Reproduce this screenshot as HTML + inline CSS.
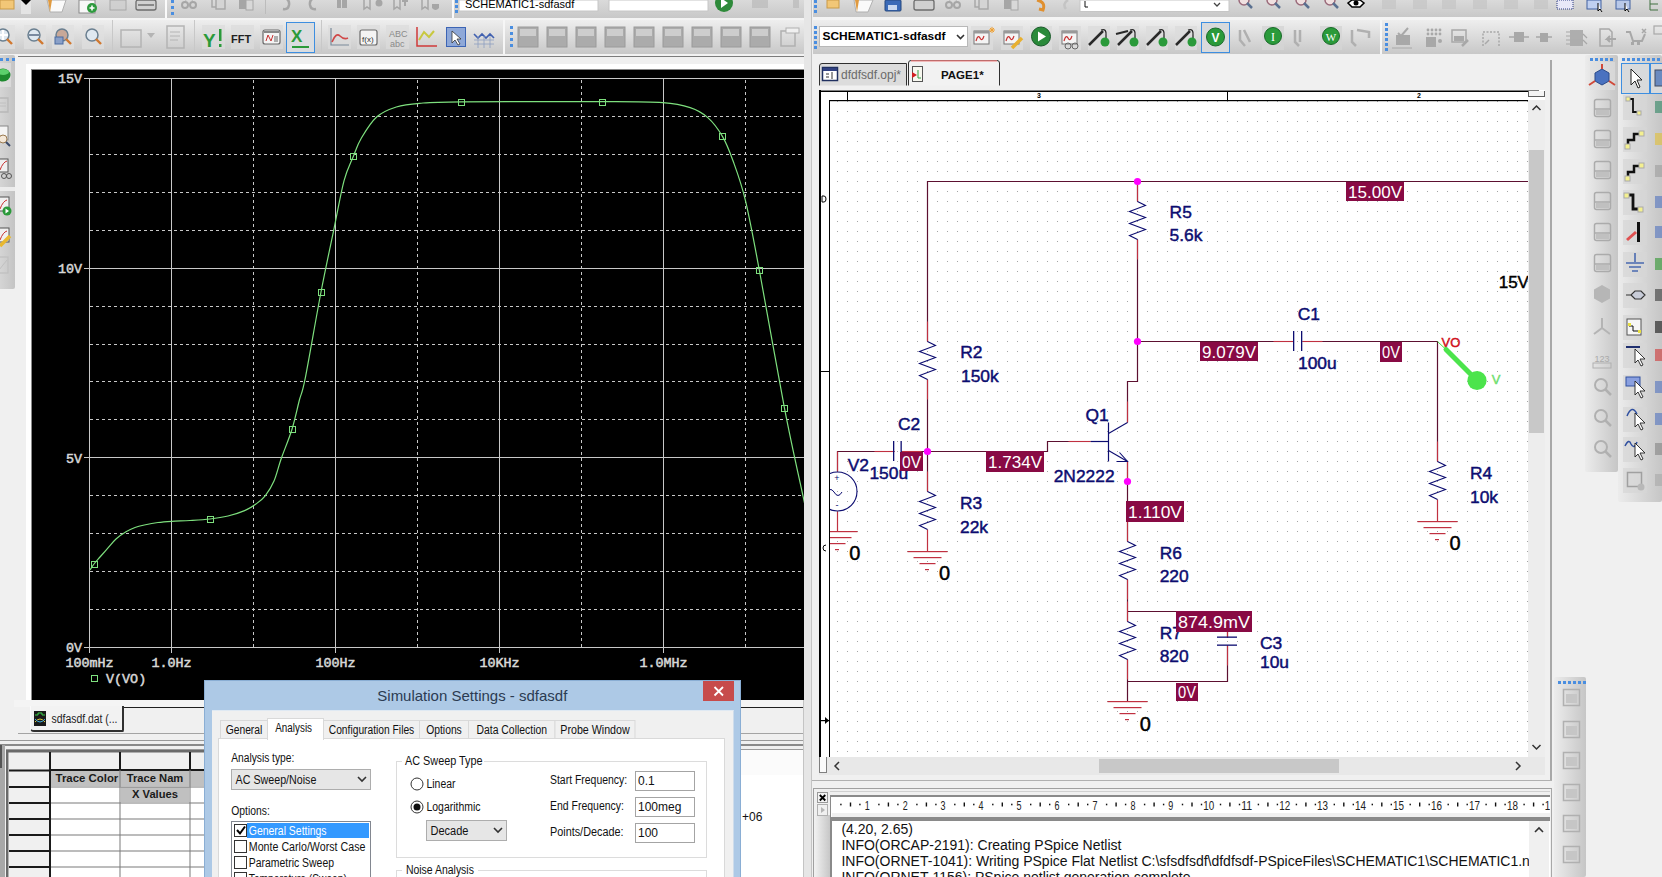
<!DOCTYPE html><html><head><meta charset="utf-8"><style>
*{margin:0;padding:0;box-sizing:border-box}
html,body{width:1662px;height:877px;overflow:hidden;background:#f0f0f0;font-family:"Liberation Sans", sans-serif;position:relative}
.a{position:absolute}
.tb{position:absolute;background:linear-gradient(#ececec,#d6d6d6)}
.btn{position:absolute;width:22px;height:22px;background:rgba(255,255,255,0.25)}
</style></head><body>
<div class="tb" style="left:0;top:0;width:804px;height:18px;background:linear-gradient(#dadada,#c8c8c8)"></div>
<div class="a" style="left:0;top:18px;width:804px;height:2px;background:#f4f4f4"></div>
<div class="tb" style="left:0;top:20px;width:804px;height:34px;background:linear-gradient(#eeeeee,#c8c8c8)"></div>
<div class="a" style="left:0;top:54px;width:804px;height:2px;background:#f2f2f2"></div>
<div class="a" style="left:18px;top:56px;width:786px;height:1px;background:#7c7c7c"></div>
<div class="a" style="left:26px;top:64px;width:778px;height:642px;background:#ffffff"></div>
<div class="a" style="left:31px;top:69px;width:773px;height:632px;background:#8a8a8a"></div>
<svg class="a" style="left:32px;top:70px" width="772" height="630" viewBox="32 70 772 630"><rect x="32" y="70" width="772" height="630" fill="#000"/><line x1="84" y1="78.5" x2="804" y2="78.5" stroke="#c8c8c8" stroke-width="1"/><line x1="90" y1="116.5" x2="804" y2="116.5" stroke="#c8c8c8" stroke-width="1" stroke-dasharray="3 3"/><line x1="90" y1="154.5" x2="804" y2="154.5" stroke="#c8c8c8" stroke-width="1" stroke-dasharray="3 3"/><line x1="90" y1="192.5" x2="804" y2="192.5" stroke="#c8c8c8" stroke-width="1" stroke-dasharray="3 3"/><line x1="90" y1="230.5" x2="804" y2="230.5" stroke="#c8c8c8" stroke-width="1" stroke-dasharray="3 3"/><line x1="84" y1="268.5" x2="804" y2="268.5" stroke="#c8c8c8" stroke-width="1"/><line x1="90" y1="306.5" x2="804" y2="306.5" stroke="#c8c8c8" stroke-width="1" stroke-dasharray="3 3"/><line x1="90" y1="344.5" x2="804" y2="344.5" stroke="#c8c8c8" stroke-width="1" stroke-dasharray="3 3"/><line x1="90" y1="381.5" x2="804" y2="381.5" stroke="#c8c8c8" stroke-width="1" stroke-dasharray="3 3"/><line x1="90" y1="419.5" x2="804" y2="419.5" stroke="#c8c8c8" stroke-width="1" stroke-dasharray="3 3"/><line x1="84" y1="457.5" x2="804" y2="457.5" stroke="#c8c8c8" stroke-width="1"/><line x1="90" y1="495.5" x2="804" y2="495.5" stroke="#c8c8c8" stroke-width="1" stroke-dasharray="3 3"/><line x1="90" y1="533.5" x2="804" y2="533.5" stroke="#c8c8c8" stroke-width="1" stroke-dasharray="3 3"/><line x1="90" y1="571.5" x2="804" y2="571.5" stroke="#c8c8c8" stroke-width="1" stroke-dasharray="3 3"/><line x1="90" y1="609.5" x2="804" y2="609.5" stroke="#c8c8c8" stroke-width="1" stroke-dasharray="3 3"/><line x1="84" y1="647.5" x2="804" y2="647.5" stroke="#c8c8c8" stroke-width="1"/><line x1="89.5" y1="78" x2="89.5" y2="653" stroke="#c8c8c8" stroke-width="1"/><line x1="171.5" y1="78" x2="171.5" y2="653" stroke="#c8c8c8" stroke-width="1"/><line x1="253.5" y1="80" x2="253.5" y2="647" stroke="#c8c8c8" stroke-width="1" stroke-dasharray="3 3"/><line x1="335.5" y1="78" x2="335.5" y2="653" stroke="#c8c8c8" stroke-width="1"/><line x1="417.5" y1="80" x2="417.5" y2="647" stroke="#c8c8c8" stroke-width="1" stroke-dasharray="3 3"/><line x1="499.5" y1="78" x2="499.5" y2="653" stroke="#c8c8c8" stroke-width="1"/><line x1="581.5" y1="80" x2="581.5" y2="647" stroke="#c8c8c8" stroke-width="1" stroke-dasharray="3 3"/><line x1="663.5" y1="78" x2="663.5" y2="653" stroke="#c8c8c8" stroke-width="1"/><line x1="745.5" y1="80" x2="745.5" y2="647" stroke="#c8c8c8" stroke-width="1" stroke-dasharray="3 3"/><text x="82" y="82.5" fill="#d8d8d8" stroke="#d8d8d8" stroke-width="0.5" font-family='"Liberation Mono", monospace' font-size="13.4" text-anchor="end">15V</text><text x="82" y="272.5" fill="#d8d8d8" stroke="#d8d8d8" stroke-width="0.5" font-family='"Liberation Mono", monospace' font-size="13.4" text-anchor="end">10V</text><text x="82" y="462.5" fill="#d8d8d8" stroke="#d8d8d8" stroke-width="0.5" font-family='"Liberation Mono", monospace' font-size="13.4" text-anchor="end">5V</text><text x="82" y="651.5" fill="#d8d8d8" stroke="#d8d8d8" stroke-width="0.5" font-family='"Liberation Mono", monospace' font-size="13.4" text-anchor="end">0V</text><text x="89.5" y="667" fill="#d8d8d8" stroke="#d8d8d8" stroke-width="0.5" font-family='"Liberation Mono", monospace' font-size="13.4" text-anchor="middle">100mHz</text><text x="171.5" y="667" fill="#d8d8d8" stroke="#d8d8d8" stroke-width="0.5" font-family='"Liberation Mono", monospace' font-size="13.4" text-anchor="middle">1.0Hz</text><text x="335.5" y="667" fill="#d8d8d8" stroke="#d8d8d8" stroke-width="0.5" font-family='"Liberation Mono", monospace' font-size="13.4" text-anchor="middle">100Hz</text><text x="499.5" y="667" fill="#d8d8d8" stroke="#d8d8d8" stroke-width="0.5" font-family='"Liberation Mono", monospace' font-size="13.4" text-anchor="middle">10KHz</text><text x="663.5" y="667" fill="#d8d8d8" stroke="#d8d8d8" stroke-width="0.5" font-family='"Liberation Mono", monospace' font-size="13.4" text-anchor="middle">1.0MHz</text><rect x="91.5" y="675.5" width="6" height="6" fill="none" stroke="#7ee07e" stroke-width="1"/><text x="106" y="683" fill="#d8d8d8" stroke="#d8d8d8" stroke-width="0.5" font-family='"Liberation Mono", monospace' font-size="13.4" text-anchor="start">V(VO)</text><path d="M90,570 C90.67,569.00 92.33,566.17 94,564 C95.67,561.83 97.70,559.63 100,557 C102.30,554.37 105.13,551.20 107.8,548.2 C110.47,545.20 112.97,541.73 116,539 C119.03,536.27 122.83,533.72 126,531.8 C129.17,529.88 131.95,528.63 135,527.5 C138.05,526.37 140.47,525.83 144.3,525 C148.13,524.17 153.43,523.12 158,522.5 C162.57,521.88 166.37,521.63 171.7,521.3 C177.03,520.97 183.62,520.88 190,520.5 C196.38,520.12 203.67,519.75 210,519 C216.33,518.25 222.23,517.40 228,516 C233.77,514.60 239.93,512.60 244.6,510.6 C249.27,508.60 252.57,506.47 256,504 C259.43,501.53 262.20,499.63 265.2,495.8 C268.20,491.97 271.37,487.08 274,481 C276.63,474.92 278.00,467.93 281,459.3 C284.00,450.67 288.93,439.08 292,429.2 C295.07,419.32 297.20,408.47 299.4,400 C301.60,391.53 301.60,396.40 305.2,378.4 C308.80,360.40 316.15,317.18 321,292 C325.85,266.82 330.47,245.83 334.3,227.3 C338.13,208.77 340.83,192.62 344,180.8 C347.17,168.98 350.40,163.53 353.3,156.4 C356.20,149.27 357.47,144.60 361.4,138 C365.33,131.40 371.08,121.97 376.9,116.8 C382.72,111.63 389.20,109.25 396.3,107 C403.40,104.75 408.72,104.17 419.5,103.3 C430.28,102.43 430.58,102.08 461,101.8 C491.42,101.52 568.38,101.47 602,101.6 C635.62,101.73 648.00,101.60 662.7,102.6 C677.40,103.60 682.68,105.10 690.2,107.6 C697.72,110.10 702.45,112.85 707.8,117.6 C713.15,122.35 718.13,129.00 722.3,136.1 C726.47,143.20 728.95,149.50 732.8,160.2 C736.65,170.90 740.97,181.92 745.4,200.3 C749.83,218.68 752.88,235.83 759.4,270.5 C765.92,305.17 777.23,370.72 784.5,408.3 C791.77,445.88 799.42,479.05 803,496 C806.58,512.95 805.50,507.67 806,510" fill="none" stroke="#7ee07e" stroke-width="1.2" stroke-linejoin="round"/><rect x="91.5" y="561.5" width="6" height="6" fill="none" stroke="#7ee07e" stroke-width="1"/><rect x="207.5" y="516.5" width="6" height="6" fill="none" stroke="#7ee07e" stroke-width="1"/><rect x="289.5" y="426.5" width="6" height="6" fill="none" stroke="#7ee07e" stroke-width="1"/><rect x="318.5" y="289.5" width="6" height="6" fill="none" stroke="#7ee07e" stroke-width="1"/><rect x="350.5" y="153.5" width="6" height="6" fill="none" stroke="#7ee07e" stroke-width="1"/><rect x="458.5" y="99.5" width="6" height="6" fill="none" stroke="#7ee07e" stroke-width="1"/><rect x="599.5" y="99.5" width="6" height="6" fill="none" stroke="#7ee07e" stroke-width="1"/><rect x="719.5" y="133.5" width="6" height="6" fill="none" stroke="#7ee07e" stroke-width="1"/><rect x="756.5" y="267.5" width="6" height="6" fill="none" stroke="#7ee07e" stroke-width="1"/><rect x="781.5" y="405.5" width="6" height="6" fill="none" stroke="#7ee07e" stroke-width="1"/></svg>
<svg class="a" style="left:0;top:0" width="804" height="70" viewBox="0 0 804 70"><rect x="0" y="0" width="14" height="9" fill="#f2c777" stroke="#c99a48"/><rect x="21" y="0" width="10" height="14" fill="#e4e4e4"/><path d="M21,0 L31,0 L26,5Z" fill="#000"/><path d="M47,0 L66,0 L62,12 L50,12Z" fill="#fafafa" stroke="#b0b0b0"/><path d="M48,0 L52,0 L50,12Z" fill="#e09a40"/><rect x="79" y="0" width="16" height="13" fill="#f8f8f8" stroke="#8a8a8a"/><circle cx="92" cy="8" r="5" fill="#2e9a3e"/><path d="M89.5,8 h5 M92,5.5 v5" stroke="#fff" stroke-width="1.6"/><rect x="110" y="0" width="16" height="10" fill="#cfcfcf" stroke="#9e9e9e" opacity="0.8"/><rect x="136" y="0" width="20" height="10" rx="2" fill="#d0d0d0" stroke="#6c6c6c" stroke-width="1.3"/><rect x="138" y="4" width="16" height="2" fill="#888"/><rect x="165" y="0" width="2" height="18" fill="#fafafa"/><rect x="171" y="0" width="3" height="3" fill="#4a8ee0"/><rect x="171" y="6" width="3" height="3" fill="#4a8ee0"/><rect x="171" y="12" width="3" height="3" fill="#4a8ee0"/><circle cx="185" cy="5" r="3" fill="none" stroke="#a6a6a6" stroke-width="2"/><circle cx="193" cy="5" r="3" fill="none" stroke="#a6a6a6" stroke-width="2"/><path d="M185,0 l8,-6 M193,0 l-8,-6" stroke="#a6a6a6" stroke-width="2"/><rect x="212" y="-4" width="9" height="11" fill="none" stroke="#a6a6a6" stroke-width="1.4"/><rect x="216" y="-1" width="9" height="10" fill="#d4d4d4" stroke="#a6a6a6" stroke-width="1.4"/><rect x="239" y="-3" width="13" height="12" fill="#a6a6a6"/><rect x="246" y="0" width="7" height="10" fill="#d8d8d8" stroke="#a6a6a6"/><rect x="265" y="0" width="1" height="14" fill="#bcbcbc"/><path d="M282,-2 q8,0 7,7 q-1,5 -6,4" fill="none" stroke="#a6a6a6" stroke-width="2.5"/><path d="M317,-2 q-8,0 -7,7 q1,5 6,4" fill="none" stroke="#a6a6a6" stroke-width="2.5"/><rect x="337" y="-2" width="4" height="10" fill="#a6a6a6"/><rect x="342" y="-4" width="5" height="12" fill="#a6a6a6"/><path d="M364,-2 v11 l3,-2 l3,2 v-11" fill="none" stroke="#a6a6a6" stroke-width="1.5"/><circle cx="379" cy="3" r="3.5" fill="#a6a6a6"/><path d="M394,-2 v11 l3,-2 l3,2 v-11" fill="none" stroke="#a6a6a6" stroke-width="1.5"/><path d="M405,6 v-8 M402,1 h6" stroke="#a6a6a6" stroke-width="2"/><path d="M422,-2 v11 l3,-2 l3,2 v-11" fill="none" stroke="#a6a6a6" stroke-width="1.5"/><path d="M432,4 h7 v4 q-3.5,4 -7,0Z" fill="#a6a6a6"/><rect x="452" y="0" width="2" height="18" fill="#fafafa"/><rect x="455" y="0" width="3" height="3" fill="#4a8ee0"/><rect x="455" y="5" width="3" height="3" fill="#4a8ee0"/><rect x="455" y="10" width="3" height="3" fill="#4a8ee0"/><rect x="459" y="0" width="139" height="11" fill="#fff" stroke="#c6c6c6"/><text x="465" y="8" font-family='Liberation Sans' font-size="11">SCHEMATIC1-sdfasdf</text><rect x="609" y="0" width="99" height="11" fill="#fff" stroke="#c6c6c6"/><circle cx="724" cy="3" r="9" fill="#2e8a3a"/><path d="M721,-2 L728,3 L721,8Z" fill="#fff"/><rect x="752" y="0" width="16" height="8" fill="#bdbdbd" opacity="0.8"/><rect x="793" y="0" width="6" height="8" fill="#bdbdbd" opacity="0.8"/><rect x="-7" y="25" width="22" height="24" fill="#e0e0e0" opacity="0.7"/><circle cx="3" cy="35" r="6" fill="#dfe8f0" stroke="#6a7f90" stroke-width="1.5"/><path d="M7,39 L12,44" stroke="#d07830" stroke-width="2.4"/><rect x="24" y="25" width="22" height="24" fill="#e0e0e0" opacity="0.7"/><circle cx="34" cy="35" r="6" fill="#dfe8f0" stroke="#6a7f90" stroke-width="1.5"/><path d="M38,39 L43,44" stroke="#d07830" stroke-width="2.4"/><rect x="52" y="25" width="22" height="24" fill="#e0e0e0" opacity="0.7"/><circle cx="62" cy="35" r="6" fill="#c8a898" stroke="#6a7f90" stroke-width="1.5"/><path d="M66,39 L71,44" stroke="#d07830" stroke-width="2.4"/><rect x="82" y="25" width="22" height="24" fill="#e0e0e0" opacity="0.7"/><circle cx="92" cy="35" r="6" fill="#dfe8f0" stroke="#6a7f90" stroke-width="1.5"/><path d="M96,39 L101,44" stroke="#d07830" stroke-width="2.4"/><path d="M29,35 h10" stroke="#7a8aa0" stroke-width="2"/><path d="M-2,35 h10 M3,30 v10" stroke="#fff" stroke-width="2"/><rect x="55" y="37" width="8" height="7" fill="#8aa0c8" stroke="#4a6aa0"/><rect x="112" y="20" width="1" height="32" fill="#c8c8c8"/><rect x="121" y="30" width="20" height="17" fill="none" stroke="#b4b4b4" stroke-width="1.5"/><path d="M147,33 L155,33 L151,38Z" fill="#b4b4b4"/><rect x="167" y="26" width="17" height="22" fill="none" stroke="#b4b4b4" stroke-width="1.5"/><path d="M170,32 h10 M170,36 h10 M170,40 h8" stroke="#b4b4b4"/><rect x="194" y="20" width="1" height="32" fill="#c8c8c8"/><rect x="202" y="25" width="23" height="24" fill="#dcdcdc" opacity="0.7"/><text x="203" y="47" font-family='Liberation Sans' font-weight="bold" font-size="19" fill="#2a9a3a">Y</text><rect x="219" y="29" width="2.5" height="12" fill="#2a9a3a"/><rect x="219" y="44" width="2.5" height="3" fill="#2a9a3a"/><rect x="231" y="25" width="23" height="24" fill="#dcdcdc" opacity="0.7"/><text x="231" y="43" font-family='Liberation Sans' font-weight="bold" font-size="11" fill="#222">FFT</text><rect x="260" y="25" width="23" height="24" fill="#dcdcdc" opacity="0.7"/><rect x="263" y="30" width="17" height="14" rx="2" fill="#f4f4f4" stroke="#6a6a6a" stroke-width="1.2"/><rect x="264" y="31" width="15" height="2" fill="#888"/><path d="M266,41 L268,35 L271,41 L273,35" stroke="#c83030" fill="none"/><path d="M274,37 h4 M274,39 h4 M274,41 h4" stroke="#666"/><rect x="286.5" y="22.5" width="28" height="30" fill="#dadde0" stroke="#3d8ee0" stroke-width="1"/><text x="291" y="42" font-family='Liberation Sans' font-weight="bold" font-size="17" fill="#2a9a3a">X</text><rect x="292" y="46" width="17" height="2" fill="#2a9a3a"/><rect x="321" y="20" width="1" height="32" fill="#c8c8c8"/><rect x="328" y="25" width="23" height="24" fill="#dcdcdc" opacity="0.7"/><path d="M331,28 v17 h18" fill="none" stroke="#7a8a9a" stroke-width="1.2"/><path d="M332,42 q4,-10 8,-6 q4,4 8,2" fill="none" stroke="#d04848" stroke-width="1.6"/><rect x="357" y="25" width="23" height="24" fill="#dcdcdc" opacity="0.7"/><rect x="360" y="30" width="17" height="15" rx="2" fill="#f4f4f4" stroke="#6a6a6a" stroke-width="1.2"/><text x="362" y="42" font-family='Liberation Sans' font-size="8" fill="#333">f(x)</text><rect x="386" y="25" width="23" height="24" fill="#dcdcdc" opacity="0.7"/><text x="389" y="37" font-family='Liberation Sans' font-size="9" fill="#8a8a8a">ABC</text><text x="390" y="47" font-family='Liberation Sans' font-size="9" fill="#8a8a8a">abc</text><path d="M417,27 v19 h20" fill="none" stroke="#d03a3a" stroke-width="1.5"/><path d="M419,40 l5,-8 l5,5 l5,-6" fill="none" stroke="#c8c840" stroke-width="2"/><rect x="446.5" y="27.5" width="19" height="19" fill="#8ea8d8" stroke="#3c64b4"/><path d="M452,31 L452,43 L455,40 L458,45 L460,44 L457,39 L461,39Z" fill="#fff" stroke="#333" stroke-width="0.8"/><path d="M474,34 l4,4 l4,-4 l4,4 l4,-4 l4,4" fill="none" stroke="#4060b0" stroke-width="1.6"/><path d="M474,40 h20 M474,44 h20 M478,36 v12 M484,36 v12 M490,36 v12" stroke="#8ea0c0" stroke-width="0.8"/><rect x="503" y="20" width="2" height="34" fill="#f6f6f6"/><rect x="510" y="26" width="3" height="3" fill="#4a8ee0"/><rect x="510" y="32" width="3" height="3" fill="#4a8ee0"/><rect x="510" y="38" width="3" height="3" fill="#4a8ee0"/><rect x="510" y="44" width="3" height="3" fill="#4a8ee0"/><rect x="518" y="27" width="20" height="20" fill="#ababab" stroke="#9a9a9a"/><rect x="520" y="29" width="16" height="7" fill="#cdcdcd"/><rect x="547" y="27" width="20" height="20" fill="#ababab" stroke="#9a9a9a"/><rect x="549" y="29" width="16" height="7" fill="#cdcdcd"/><rect x="576" y="27" width="20" height="20" fill="#ababab" stroke="#9a9a9a"/><rect x="578" y="29" width="16" height="7" fill="#cdcdcd"/><rect x="605" y="27" width="20" height="20" fill="#ababab" stroke="#9a9a9a"/><rect x="607" y="29" width="16" height="7" fill="#cdcdcd"/><rect x="634" y="27" width="20" height="20" fill="#ababab" stroke="#9a9a9a"/><rect x="636" y="29" width="16" height="7" fill="#cdcdcd"/><rect x="663" y="27" width="20" height="20" fill="#ababab" stroke="#9a9a9a"/><rect x="665" y="29" width="16" height="7" fill="#cdcdcd"/><rect x="692" y="27" width="20" height="20" fill="#ababab" stroke="#9a9a9a"/><rect x="694" y="29" width="16" height="7" fill="#cdcdcd"/><rect x="721" y="27" width="20" height="20" fill="#ababab" stroke="#9a9a9a"/><rect x="723" y="29" width="16" height="7" fill="#cdcdcd"/><rect x="750" y="27" width="20" height="20" fill="#ababab" stroke="#9a9a9a"/><rect x="752" y="29" width="16" height="7" fill="#cdcdcd"/><rect x="781" y="31" width="14" height="15" fill="none" stroke="#b0b0b0" stroke-width="1.5"/><rect x="786" y="28" width="13" height="5" fill="#f0f0f0" stroke="#b0b0b0"/></svg>
<svg class="a" style="left:0;top:55px" width="18" height="240" viewBox="0 55 18 240"><defs><linearGradient id="ltg" x1="0" x2="1"><stop offset="0" stop-color="#d8d8d8"/><stop offset="1" stop-color="#c4c4c4"/></linearGradient></defs><rect x="-3" y="55" width="18" height="234" rx="2" fill="url(#ltg)"/><rect x="0" y="58" width="3" height="3" fill="#4a8ee0"/><rect x="6" y="58" width="3" height="3" fill="#4a8ee0"/><rect x="12" y="58" width="3" height="3" fill="#4a8ee0"/><rect x="-2" y="63" width="13" height="24" fill="#e4e4e4" opacity="0.6"/><ellipse cx="3" cy="75" rx="7.5" ry="6.5" fill="#1e8a2e"/><ellipse cx="3" cy="72" rx="6" ry="3" fill="#5cd06c"/><path d="M-1,98 h9 v14 h-9" fill="none" stroke="#b8b8b8" stroke-width="1.3"/><path d="M0,103 h6 M0,106 h6" stroke="#c0c0c0"/><rect x="-2" y="126" width="10" height="14" fill="#f4f4f4" stroke="#888"/><circle cx="3" cy="139" r="4" fill="#f4e8d8" stroke="#9a7a50"/><path d="M6,142 l4,4" stroke="#3a4a6a" stroke-width="2"/><rect x="-2" y="159" width="10" height="13" fill="#f0f0f0" stroke="#555"/><path d="M0,170 q3,-8 7,-9" stroke="#c83030" fill="none"/><circle cx="4" cy="176" r="2.5" fill="none" stroke="#555"/><circle cx="9" cy="176" r="2.5" fill="none" stroke="#555"/><rect x="0" y="187" width="15" height="4" fill="#ececec"/><rect x="-2" y="197" width="11" height="14" fill="#f0f0f0" stroke="#555"/><path d="M0,209 q3,-8 7,-9" stroke="#c83030" fill="none"/><circle cx="7" cy="211" r="4.5" fill="#2a9a3a"/><path d="M5.5,208.5 l3.5,2.5 l-3.5,2.5Z" fill="#fff"/><rect x="-2" y="228" width="11" height="14" fill="#f0f0f0" stroke="#555"/><path d="M0,240 q3,-8 7,-9" stroke="#c83030" fill="none"/><path d="M0,246 L10,236" stroke="#e8b830" stroke-width="3.5"/><rect x="-2" y="257" width="10" height="16" fill="none" stroke="#c0c0c0" stroke-width="1.3"/><path d="M-1,270 l8,-10" stroke="#c0c0c0"/></svg>
<div class="a" style="left:14px;top:700px;width:790px;height:7px;background:#f4f4f4"></div>
<div class="a" style="left:122px;top:706.5px;width:682px;height:1.5px;background:#202020"></div>
<div class="a" style="left:30px;top:706px;width:94px;height:26px;background:#f2f2f2;border-right:2px solid #303030;border-bottom:2px solid #303030;border-left:1px solid #fafafa;border-radius:0 0 2px 4px"></div>
<svg class="a" style="left:33px;top:710px" width="16" height="18" viewBox="0 0 16 18"><rect x="1" y="1" width="12" height="15" fill="#1a1a1a"/><path d="M2,5 h3 v-2 h4 v2 h3" stroke="#3ad04a" fill="none"/><path d="M2,12 q5,-6 10,0" stroke="#e0d040" fill="none"/><path d="M2,9 q5,6 10,0" stroke="#40b0e0" fill="none"/></svg>
<svg class="a" style="left:50px;top:710px" width="72" height="18" viewBox="50 710 72 18"><text x="51.5" y="723" font-family="Liberation Sans" font-size="12" fill="#222" textLength="66" lengthAdjust="spacingAndGlyphs">sdfasdf.dat (...</text></svg>
<div class="a" style="left:18px;top:733px;width:786px;height:1px;background:#a4a4a4"></div>
<div class="a" style="left:0px;top:740px;width:804px;height:137px;background:#f0f0f0"></div>
<div class="a" style="left:0px;top:740px;width:804px;height:1px;background:#9a9a9a"></div>
<div class="a" style="left:0px;top:744px;width:804px;height:1.5px;background:#8a8a8a"></div>
<div class="a" style="left:6px;top:749px;width:798px;height:1px;background:#9a9a9a"></div>
<div class="a" style="left:6px;top:750px;width:798px;height:25px;background:#fbfbfb"></div>
<div class="a" style="left:6px;top:775px;width:798px;height:102px;background:#fff"></div>
<div class="a" style="left:0px;top:745px;width:5px;height:132px;background:#a8a8a8"></div>
<div class="a" style="left:0px;top:745px;width:1.5px;height:23px;background:#555"></div>
<div class="a" style="left:803px;top:700px;width:1px;height:177px;background:#c4c4c4"></div>
<svg class="a" style="left:0;top:746px" width="400" height="131" viewBox="0 746 400 131"><rect x="6" y="750" width="394" height="131" fill="#fff"/><rect x="9" y="752" width="40" height="130" fill="#f0f0f0"/><rect x="51" y="752" width="349" height="18" fill="#f0f0f0"/><rect x="51" y="771" width="349" height="15" fill="#c0c0c0"/><rect x="51" y="787" width="69" height="15" fill="#fff"/><rect x="191" y="787" width="209" height="15" fill="#fff"/><rect x="121" y="787" width="68" height="15" fill="#c0c0c0"/><rect x="51" y="770" width="349" height="1" fill="#7a7a7a"/><rect x="9" y="769.5" width="42" height="2" fill="#1a1a1a"/><rect x="51" y="786.5" width="349" height="1" fill="#7a7a7a"/><rect x="9" y="786.0" width="42" height="2" fill="#1a1a1a"/><rect x="51" y="802.5" width="349" height="1" fill="#7a7a7a"/><rect x="9" y="802.0" width="42" height="2" fill="#1a1a1a"/><rect x="51" y="818.5" width="349" height="1" fill="#7a7a7a"/><rect x="9" y="818.0" width="42" height="2" fill="#1a1a1a"/><rect x="51" y="834.5" width="349" height="1" fill="#7a7a7a"/><rect x="9" y="834.0" width="42" height="2" fill="#1a1a1a"/><rect x="51" y="850.5" width="349" height="1" fill="#7a7a7a"/><rect x="9" y="850.0" width="42" height="2" fill="#1a1a1a"/><rect x="51" y="866.5" width="349" height="1" fill="#7a7a7a"/><rect x="9" y="866.0" width="42" height="2" fill="#1a1a1a"/><rect x="51" y="882.5" width="349" height="1" fill="#7a7a7a"/><rect x="9" y="882.0" width="42" height="2" fill="#1a1a1a"/><rect x="51" y="769" width="349" height="2" fill="#1a1a1a"/><rect x="6" y="750" width="2.5" height="131" fill="#6a6a6a"/><rect x="6" y="750" width="394" height="2.5" fill="#6a6a6a"/><rect x="49" y="752" width="2" height="130" fill="#1a1a1a"/><rect x="119.5" y="752" width="1" height="130" fill="#7a7a7a"/><rect x="189.5" y="752" width="1" height="130" fill="#7a7a7a"/><rect x="119" y="752" width="2" height="18" fill="#1a1a1a"/><rect x="189" y="752" width="2" height="18" fill="#1a1a1a"/><text x="55.6" y="782.4" font-family='Liberation Sans' font-weight="bold" font-size="11.2" fill="#1a1a1a" textLength="62.7" lengthAdjust="spacingAndGlyphs">Trace Color</text><text x="155" y="782.4" font-family='Liberation Sans' font-weight="bold" font-size="11.2" fill="#1a1a1a" text-anchor="middle">Trace Nam</text><text x="155" y="798.4" font-family='Liberation Sans' font-weight="bold" font-size="11.2" fill="#1a1a1a" text-anchor="middle">X Values</text></svg>
<div class="a" style="left:742px;top:810px;font-size:12px;color:#111;font-family:"Liberation Sans", sans-serif">+06</div>
<div class="a" style="left:804px;top:0;width:8px;height:877px;background:#e6e6e6;border-right:1px solid #c4c4c4"></div>
<div class="tb" style="left:813px;top:0;width:849px;height:17px;background:linear-gradient(#dadada,#c8c8c8)"></div>
<div class="a" style="left:813px;top:17px;width:849px;height:3px;background:#f4f4f4"></div>
<div class="tb" style="left:813px;top:20px;width:849px;height:34px;background:linear-gradient(#eeeeee,#c8c8c8)"></div>
<svg class="a" style="left:813px;top:0" width="849" height="100" viewBox="813 0 849 100"><rect x="814" y="0" width="3" height="3" fill="#4a8ee0"/><rect x="814" y="5" width="3" height="3" fill="#4a8ee0"/><rect x="814" y="10" width="3" height="3" fill="#4a8ee0"/><rect x="827" y="0" width="12" height="8" fill="#f2c777" stroke="#c99a48"/><path d="M854,0 L873,0 L868,12 L856,12Z" fill="#fafafa" stroke="#b0b0b0"/><path d="M855,0 L859,0 L857,12Z" fill="#e09a40"/><rect x="885" y="0" width="16" height="11" rx="1" fill="#3a6ab8" stroke="#24467c"/><rect x="888" y="5" width="9" height="5" fill="#c8d8f0"/><rect x="914" y="0" width="20" height="10" rx="2" fill="#d0d0d0" stroke="#6c6c6c" stroke-width="1.3"/><circle cx="949" cy="5" r="3" fill="none" stroke="#a6a6a6" stroke-width="2"/><circle cx="957" cy="5" r="3" fill="none" stroke="#a6a6a6" stroke-width="2"/><path d="M949,0 l8,-6 M957,0 l-8,-6" stroke="#a6a6a6" stroke-width="2"/><rect x="975" y="-4" width="9" height="11" fill="none" stroke="#a6a6a6" stroke-width="1.4"/><rect x="979" y="-1" width="9" height="10" fill="#d4d4d4" stroke="#a6a6a6" stroke-width="1.4"/><rect x="1004" y="-3" width="13" height="12" fill="#a6a6a6"/><rect x="1011" y="0" width="7" height="10" fill="#d8d8d8" stroke="#a6a6a6"/><path d="M1037,0 q9,2 6,10 l-4,-1" fill="none" stroke="#e09030" stroke-width="3"/><path d="M1068,0 q-6,4 -2,9" fill="none" stroke="#c4c4c4" stroke-width="2.5"/><rect x="1080" y="0" width="149" height="11.5" fill="#fff" stroke="#c6c6c6"/><path d="M1085,1 v6 h3" stroke="#111" fill="none"/><path d="M1214,3 l3,3 l3,-3" stroke="#444" fill="none" stroke-width="1.3"/><circle cx="1244" cy="0" r="5" fill="#f0e0e0" stroke="#9a6a7a" stroke-width="1.5"/><path d="M1247,3 L1252,8" stroke="#5a7090" stroke-width="2.5"/><circle cx="1272" cy="0" r="5" fill="#f0e0e0" stroke="#9a6a7a" stroke-width="1.5"/><path d="M1275,3 L1280,8" stroke="#5a7090" stroke-width="2.5"/><circle cx="1301" cy="0" r="5" fill="#f0e0e0" stroke="#9a6a7a" stroke-width="1.5"/><path d="M1304,3 L1309,8" stroke="#5a7090" stroke-width="2.5"/><circle cx="1330" cy="0" r="5" fill="#f0e0e0" stroke="#9a6a7a" stroke-width="1.5"/><path d="M1333,3 L1338,8" stroke="#5a7090" stroke-width="2.5"/><path d="M1352,0 L1360,0 L1364,3 L1360,7 L1352,7 L1348,3Z" fill="#fff" stroke="#000" stroke-width="1.5"/><circle cx="1356" cy="3" r="2.5" fill="#000"/><rect x="1382" y="0" width="14" height="9" fill="#c4c4c4" opacity="0.7"/><rect x="1413" y="0" width="14" height="9" fill="#c4c4c4" opacity="0.7"/><rect x="1442" y="0" width="14" height="9" fill="#c4c4c4" opacity="0.7"/><rect x="1473" y="0" width="14" height="9" fill="#c4c4c4" opacity="0.7"/><rect x="1504" y="0" width="14" height="9" fill="#c4c4c4" opacity="0.7"/><rect x="1534" y="0" width="14" height="9" fill="#c4c4c4" opacity="0.7"/><rect x="1557" y="0" width="16" height="9" fill="#e8e8f8" stroke="#2a3a80" stroke-dasharray="1 1"/><rect x="1587" y="0" width="14" height="9" fill="#c0d0f0" stroke="#4060a0"/><path d="M1598,3 l0,8 l2,-2 l2,3" stroke="#000" fill="#fff"/><rect x="1616" y="0" width="14" height="9" fill="#b8c8e8" stroke="#4060a0"/><path d="M1625,3 l0,8 l2,-2 l2,3" stroke="#000" fill="#fff"/><path d="M1650,0 v4 h8 M1650,4 v6 h8" stroke="#407040" fill="none"/><rect x="814" y="26" width="3" height="3" fill="#4a8ee0"/><rect x="814" y="31" width="3" height="3" fill="#4a8ee0"/><rect x="814" y="36" width="3" height="3" fill="#4a8ee0"/><rect x="814" y="41" width="3" height="3" fill="#4a8ee0"/><rect x="814" y="46" width="3" height="3" fill="#4a8ee0"/><rect x="819.5" y="26.5" width="148" height="20" fill="#fff" stroke="#b8b8b8"/><text x="822.5" y="40" font-family='Liberation Sans' font-weight="bold" font-size="11.6" fill="#000" textLength="123" lengthAdjust="spacingAndGlyphs">SCHEMATIC1-sdfasdf</text><path d="M957,35 l3.5,3.5 l3.5,-3.5" stroke="#333" fill="none" stroke-width="1.6"/><rect x="971" y="26" width="22" height="24" fill="#dcdcdc" opacity="0.8"/><rect x="974" y="31" width="15" height="13" fill="#f4f4f4" stroke="#777"/><rect x="974" y="31" width="15" height="2.5" fill="#999"/><path d="M976,41 q2,-7 4,-3 q2,4 4,-2" stroke="#c83030" fill="none" stroke-width="1.2"/><path d="M990,28 l4,4 M994,28 l-4,4 M992,27 v6 M989,30 h6" stroke="#f0a030"/><rect x="1001" y="26" width="22" height="24" fill="#dcdcdc" opacity="0.8"/><rect x="1004" y="31" width="15" height="13" fill="#f4f4f4" stroke="#777"/><rect x="1004" y="31" width="15" height="2.5" fill="#999"/><path d="M1006,41 q2,-7 4,-3 q2,4 4,-2" stroke="#c83030" fill="none" stroke-width="1.2"/><path d="M1012,48 L1022,38" stroke="#e8b030" stroke-width="3.5"/><rect x="1030" y="26" width="22" height="24" fill="#dcdcdc" opacity="0.8"/><circle cx="1041" cy="36.5" r="9.5" fill="#2a8a3a" stroke="#1a5a2a"/><path d="M1038,31.5 L1046,36.5 L1038,41.5Z" fill="#fff"/><rect x="1059" y="26" width="22" height="24" fill="#dcdcdc" opacity="0.8"/><rect x="1062" y="31" width="15" height="13" fill="#f4f4f4" stroke="#777"/><rect x="1062" y="31" width="15" height="2.5" fill="#999"/><path d="M1064,41 q2,-7 4,-3 q2,4 4,-2" stroke="#c83030" fill="none" stroke-width="1.2"/><circle cx="1068" cy="46" r="3" fill="none" stroke="#666"/><circle cx="1075" cy="46" r="3" fill="none" stroke="#666"/><rect x="1088" y="26" width="22" height="24" fill="#dcdcdc" opacity="0.8"/><path d="M1089,45 L1103,31" stroke="#2a2a2a" stroke-width="2.5"/><path d="M1101,30 q6,-2 5,6 v4" stroke="#2a2a2a" fill="none" stroke-width="1.3"/><circle cx="1105" cy="42" r="4.5" fill="#2a9a3a"/><rect x="1117" y="26" width="22" height="24" fill="#dcdcdc" opacity="0.8"/><path d="M1118,45 L1132,31" stroke="#2a2a2a" stroke-width="2.5"/><path d="M1130,30 q6,-2 5,6 v4" stroke="#2a2a2a" fill="none" stroke-width="1.3"/><circle cx="1134" cy="42" r="4.5" fill="#2a9a3a"/><rect x="1146" y="26" width="22" height="24" fill="#dcdcdc" opacity="0.8"/><path d="M1147,45 L1161,31" stroke="#2a2a2a" stroke-width="2.5"/><path d="M1159,30 q6,-2 5,6 v4" stroke="#2a2a2a" fill="none" stroke-width="1.3"/><circle cx="1163" cy="42" r="4.5" fill="#2a9a3a"/><rect x="1175" y="26" width="22" height="24" fill="#dcdcdc" opacity="0.8"/><path d="M1176,45 L1190,31" stroke="#2a2a2a" stroke-width="2.5"/><path d="M1188,30 q6,-2 5,6 v4" stroke="#2a2a2a" fill="none" stroke-width="1.3"/><circle cx="1192" cy="42" r="4.5" fill="#2a9a3a"/><path d="M1116,34 L1128,31" stroke="#2a2a2a" stroke-width="2"/><rect x="1201.5" y="22.5" width="28" height="30" fill="#d8dadc" stroke="#3d8ee0"/><circle cx="1215.5" cy="37" r="9" fill="#2a9a3a" stroke="#1a6a2a"/><text x="1215.5" y="41.5" font-family='Liberation Sans' font-weight="bold" font-size="12" fill="#fff" text-anchor="middle">V</text><path d="M1240,30 v10 l5,6 M1244,30 l6,12" stroke="#b0b0b0" stroke-width="2.5" fill="none"/><rect x="1262" y="26" width="22" height="24" fill="#d4d4d4" opacity="0.8"/><circle cx="1273" cy="36" r="8.5" fill="#2a9a3a" stroke="#1a6a2a"/><text x="1273" y="40.5" font-family='Liberation Serif' font-size="12" fill="#fff" text-anchor="middle">I</text><path d="M1295,30 v12 l4,4 M1300,30 v12" stroke="#b0b0b0" stroke-width="2.5" fill="none"/><rect x="1320" y="26" width="22" height="24" fill="#d4d4d4" opacity="0.8"/><circle cx="1331" cy="36" r="8.5" fill="#2a9a3a" stroke="#1a6a2a"/><text x="1331" y="40.5" font-family='Liberation Serif' font-size="11" fill="#fff" text-anchor="middle">W</text><path d="M1352,30 v12 l4,4 M1357,30 l12,2 v6" stroke="#b0b0b0" stroke-width="2.5" fill="none"/><rect x="1380" y="20" width="2" height="34" fill="#f6f6f6"/><rect x="1385" y="23" width="3" height="3" fill="#4a8ee0"/><rect x="1385" y="28" width="3" height="3" fill="#4a8ee0"/><rect x="1385" y="33" width="3" height="3" fill="#4a8ee0"/><rect x="1385" y="38" width="3" height="3" fill="#4a8ee0"/><rect x="1385" y="43" width="3" height="3" fill="#4a8ee0"/><rect x="1385" y="48" width="3" height="3" fill="#4a8ee0"/><rect x="1396" y="35" width="14" height="10" fill="#a8a8a8"/><path d="M1398,33 l3,3 l7,-8" stroke="#a8a8a8" stroke-width="2" fill="none"/><path d="M1392,48 h20" stroke="#a8a8a8"/><rect x="1426" y="37" width="10" height="10" fill="#a8a8a8"/><circle cx="1428" cy="30" r="1.4" fill="#a8a8a8"/><circle cx="1428" cy="34" r="1.4" fill="#a8a8a8"/><circle cx="1432" cy="30" r="1.4" fill="#a8a8a8"/><circle cx="1432" cy="34" r="1.4" fill="#a8a8a8"/><circle cx="1436" cy="30" r="1.4" fill="#a8a8a8"/><circle cx="1436" cy="34" r="1.4" fill="#a8a8a8"/><circle cx="1440" cy="30" r="1.4" fill="#a8a8a8"/><circle cx="1440" cy="34" r="1.4" fill="#a8a8a8"/><circle cx="1440" cy="41" r="2" fill="#a8a8a8"/><rect x="1452" y="30" width="14" height="12" fill="none" stroke="#a8a8a8" stroke-width="1.5"/><rect x="1454" y="36" width="10" height="5" fill="#a8a8a8"/><path d="M1462,46 l6,-6" stroke="#a8a8a8" stroke-width="2.5"/><path d="M1483,46 v-14 h16 v14" stroke="#a8a8a8" stroke-width="1.5" stroke-dasharray="2 1.5" fill="none"/><path d="M1485,44 l4,-4" stroke="#a8a8a8" stroke-width="1.5"/><path d="M1509,37 h5 M1524,37 h5" stroke="#a8a8a8" stroke-width="1.5"/><rect x="1514" y="32" width="10" height="10" fill="#a8a8a8"/><path d="M1536,37 h4 M1548,37 h4" stroke="#a8a8a8" stroke-width="1.5"/><rect x="1540" y="33" width="8" height="9" fill="#a8a8a8"/><rect x="1570" y="30" width="13" height="16" fill="#a8a8a8" opacity="0.9"/><path d="M1566,32 h4 M1566,36 h4 M1566,40 h4 M1566,44 h4 M1583,34 l4,4 M1583,40 l4,4" stroke="#a8a8a8" stroke-width="1.2"/><path d="M1600,29 h9 l3,3 v14 h-12Z" fill="none" stroke="#a8a8a8" stroke-width="1.5"/><path d="M1616,39 h-9 l3,-3 M1607,39 l3,3" stroke="#a8a8a8" stroke-width="2" fill="none"/><path d="M1626,32 h4 l3,9 h9 l3,-7" stroke="#a8a8a8" stroke-width="2" fill="none"/><rect x="1631" y="42" width="3" height="3" fill="#a8a8a8"/><rect x="1637" y="42" width="3" height="3" fill="#a8a8a8"/><path d="M1642,29 l4,4 M1646,29 l-4,4" stroke="#a8a8a8" stroke-width="1.5"/><rect x="1654" y="26" width="10" height="8" fill="none" stroke="#a8a8a8" stroke-width="1.2"/></svg>
<svg class="a" style="left:813px;top:58px" width="300" height="32" viewBox="813 58 300 32"><path d="M819.5,85.5 V66 q0,-2.5 2.5,-2.5 H906.5 V85.5" fill="#dcdcdc" stroke="#303030" stroke-width="1"/><path d="M908.5,85.5 V63 q0,-2.5 2.5,-2.5 H997 q2.5,0 2.5,2.5 V85.5" fill="#f2f2f2" stroke="#303030" stroke-width="1"/><path d="M911,60.8 H997" stroke="#f08080" stroke-width="1.2"/><rect x="822.5" y="67.5" width="15" height="13" fill="#fff" stroke="#203060" stroke-width="1.5"/><rect x="823" y="68" width="14" height="3" fill="#304080"/><path d="M826,74 h3 M826,77 h3 M832,72 v7" stroke="#333"/><rect x="912.5" y="66.5" width="10" height="15" fill="#f8f8f0" stroke="#555"/><path d="M912,72 L917,75 L912,78Z" fill="#d02020"/><path d="M918,70 v8 h3" stroke="#30a040" fill="none"/><text x="841" y="79" font-family='Liberation Sans' font-size="12" fill="#6a6a6a">dfdfsdf.opj*</text><text x="941" y="78.5" font-family='Liberation Sans' font-weight="bold" font-size="11.5" fill="#111">PAGE1*</text></svg>
<div class="a" style="left:819px;top:90px;width:726px;height:667px;background:#fff"></div>
<svg class="a" style="left:819px;top:90px" width="726" height="667" viewBox="819 90 726 667"><defs><pattern id="dots" x="0" y="0" width="10" height="10" patternUnits="userSpaceOnUse"><rect x="7" y="1" width="1" height="1" fill="#a4a4a4"/></pattern></defs><rect x="819" y="90" width="726" height="667" fill="#fff"/><rect x="830" y="101" width="700" height="660" fill="url(#dots)"/><rect x="819" y="90" width="2" height="680" fill="#000"/><rect x="819" y="90.5" width="720" height="1.5" fill="#000"/><rect x="829" y="100" width="1" height="670" fill="#000"/><rect x="829" y="100" width="710" height="1.2" fill="#000"/><rect x="847" y="91" width="1" height="9" fill="#000"/><rect x="1227" y="91" width="1" height="9" fill="#000"/><rect x="820" y="371" width="9" height="1" fill="#000"/><text x="1039" y="98" font-family="Liberation Sans" font-size="7" font-weight="bold" text-anchor="middle">3</text><text x="1419" y="98" font-family="Liberation Sans" font-size="7" font-weight="bold" text-anchor="middle">2</text><text x="823.5" y="202" font-family="Liberation Sans" font-size="7" font-weight="bold" text-anchor="middle">D</text><text x="823.5" y="550" font-family="Liberation Sans" font-size="7" font-weight="bold" text-anchor="middle">C</text><rect x="820" y="720" width="9" height="1" fill="#000"/><path d="M825,717 L829,720.5 L825,724Z" fill="#000"/><path d="M927.5,341.5 L927.5,181.5 L1528.5,181.5" fill="none" stroke="#5c1030" stroke-width="1.2"/><path d="M927.5,379.5 L927.5,491.5" fill="none" stroke="#5c1030" stroke-width="1.2"/><path d="M927.5,529.5 L927.5,551.5" fill="none" stroke="#c03040" stroke-width="1.2"/><path d="M837.5,471.5 L837.5,451.5 L894.5,451.5" fill="none" stroke="#5c1030" stroke-width="1.2"/><path d="M901.5,451.5 L1047.5,451.5 L1047.5,441.5 L1090.5,441.5" fill="none" stroke="#5c1030" stroke-width="1.2"/><path d="M1090.5,441.5 L1108.5,441.5" fill="none" stroke="#0c0c70" stroke-width="1.2"/><path d="M1137.5,181.5 L1137.5,201.5" fill="none" stroke="#5c1030" stroke-width="1.2"/><path d="M1137.5,239.5 L1137.5,381.5 L1127.5,381.5 L1127.5,422.5" fill="none" stroke="#5c1030" stroke-width="1.2"/><path d="M1137.5,341.5 L1293.5,341.5" fill="none" stroke="#5c1030" stroke-width="1.2"/><path d="M1302.5,341.5 L1437.5,341.5 L1437.5,461.5" fill="none" stroke="#5c1030" stroke-width="1.2"/><path d="M1437.5,499.5 L1437.5,521.5" fill="none" stroke="#c03040" stroke-width="1.2"/><path d="M837.5,511.5 L837.5,531.5" fill="none" stroke="#c03040" stroke-width="1.2"/><path d="M1127.5,461.5 L1127.5,541.5" fill="none" stroke="#5c1030" stroke-width="1.2"/><path d="M1127.5,579.5 L1127.5,621.5" fill="none" stroke="#5c1030" stroke-width="1.2"/><path d="M1127.5,659.5 L1127.5,701.5" fill="none" stroke="#5c1030" stroke-width="1.2"/><path d="M1127.5,611.5 L1227.5,611.5 L1227.5,637.5" fill="none" stroke="#5c1030" stroke-width="1.2"/><path d="M1227.5,645.5 L1227.5,681.5 L1127.5,681.5" fill="none" stroke="#5c1030" stroke-width="1.2"/><path d="M927.5,321.5 L927.5,341.5" fill="none" stroke="#c03040" stroke-width="1.1"/><path d="M927.5,379.5 L927.5,399.5" fill="none" stroke="#c03040" stroke-width="1.1"/><path d="M927.5,471.5 L927.5,491.5" fill="none" stroke="#c03040" stroke-width="1.1"/><path d="M1137.5,181.5 L1137.5,201.5" fill="none" stroke="#c03040" stroke-width="1.1"/><path d="M1137.5,239.5 L1137.5,259.5" fill="none" stroke="#c03040" stroke-width="1.1"/><path d="M1437.5,441.5 L1437.5,461.5" fill="none" stroke="#c03040" stroke-width="1.1"/><path d="M1127.5,521.5 L1127.5,541.5" fill="none" stroke="#c03040" stroke-width="1.1"/><path d="M1127.5,579.5 L1127.5,599.5" fill="none" stroke="#c03040" stroke-width="1.1"/><path d="M1127.5,601.5 L1127.5,621.5" fill="none" stroke="#c03040" stroke-width="1.1"/><path d="M1127.5,659.5 L1127.5,679.5" fill="none" stroke="#c03040" stroke-width="1.1"/><path d="M1127.5,401.5 L1127.5,422.5" fill="none" stroke="#c03040" stroke-width="1.1"/><path d="M1127.5,461.5 L1127.5,481.5" fill="none" stroke="#c03040" stroke-width="1.1"/><path d="M1227.5,617.5 L1227.5,637.5" fill="none" stroke="#c03040" stroke-width="1.1"/><path d="M1227.5,645.5 L1227.5,665.5" fill="none" stroke="#c03040" stroke-width="1.1"/><path d="M837.5,451.5 L837.5,471.5" fill="none" stroke="#c03040" stroke-width="1.1"/><path d="M874.5,451.5 L894.5,451.5" fill="none" stroke="#c03040" stroke-width="1.1"/><path d="M901.5,451.5 L921.5,451.5" fill="none" stroke="#c03040" stroke-width="1.1"/><path d="M1273.5,341.5 L1293.5,341.5" fill="none" stroke="#c03040" stroke-width="1.1"/><path d="M1302.5,341.5 L1322.5,341.5" fill="none" stroke="#c03040" stroke-width="1.1"/><path d="M1068.5,441.5 L1090.5,441.5" fill="none" stroke="#c03040" stroke-width="1.1"/><path d="M927.5,341.5 L935.5,345.5 L919.5,351.5 L935.5,357.5 L919.5,363.5 L935.5,369.5 L919.5,375.5 L927.5,379.5" fill="none" stroke="#0c0c70" stroke-width="1.1"/><path d="M927.5,491.5 L935.5,495.5 L919.5,501.5 L935.5,507.5 L919.5,513.5 L935.5,519.5 L919.5,525.5 L927.5,529.5" fill="none" stroke="#0c0c70" stroke-width="1.1"/><path d="M1137.5,201.5 L1145.5,205.5 L1129.5,211.5 L1145.5,217.5 L1129.5,223.5 L1145.5,229.5 L1129.5,235.5 L1137.5,239.5" fill="none" stroke="#0c0c70" stroke-width="1.1"/><path d="M1437.5,461.5 L1445.5,465.5 L1429.5,471.5 L1445.5,477.5 L1429.5,483.5 L1445.5,489.5 L1429.5,495.5 L1437.5,499.5" fill="none" stroke="#0c0c70" stroke-width="1.1"/><path d="M1127.5,541.5 L1135.5,545.5 L1119.5,551.5 L1135.5,557.5 L1119.5,563.5 L1135.5,569.5 L1119.5,575.5 L1127.5,579.5" fill="none" stroke="#0c0c70" stroke-width="1.1"/><path d="M1127.5,621.5 L1135.5,625.5 L1119.5,631.5 L1135.5,637.5 L1119.5,643.5 L1135.5,649.5 L1119.5,655.5 L1127.5,659.5" fill="none" stroke="#0c0c70" stroke-width="1.1"/><rect x="907.5" y="551" width="40" height="1.2" fill="#c03040"/><rect x="913.5" y="557" width="28" height="1.2" fill="#c03040"/><rect x="919.5" y="563" width="16" height="1.2" fill="#c03040"/><rect x="925" y="569" width="4" height="1.2" fill="#c03040"/><rect x="817.5" y="531" width="40" height="1.2" fill="#c03040"/><rect x="823.5" y="537" width="28" height="1.2" fill="#c03040"/><rect x="829.5" y="543" width="16" height="1.2" fill="#c03040"/><rect x="835" y="549" width="4" height="1.2" fill="#c03040"/><rect x="1417.5" y="521" width="40" height="1.2" fill="#c03040"/><rect x="1423.5" y="527" width="28" height="1.2" fill="#c03040"/><rect x="1429.5" y="533" width="16" height="1.2" fill="#c03040"/><rect x="1435" y="539" width="4" height="1.2" fill="#c03040"/><rect x="1107.5" y="701" width="40" height="1.2" fill="#c03040"/><rect x="1113.5" y="707" width="28" height="1.2" fill="#c03040"/><rect x="1119.5" y="713" width="16" height="1.2" fill="#c03040"/><rect x="1125" y="719" width="4" height="1.2" fill="#c03040"/><rect x="893" y="441" width="1.3" height="20" fill="#0c0c70"/><rect x="900.5" y="441" width="1.3" height="20" fill="#0c0c70"/><rect x="1293" y="331" width="1.3" height="20" fill="#0c0c70"/><rect x="1301" y="331" width="1.3" height="20" fill="#0c0c70"/><rect x="1217" y="636.5" width="20" height="1.3" fill="#0c0c70"/><rect x="1217" y="644.5" width="20" height="1.3" fill="#0c0c70"/><circle cx="837.5" cy="491.5" r="19.5" fill="none" stroke="#0c0c70" stroke-width="1.1"/><path d="M826,494 q4,-8 8,-2 q4,7 8,0" fill="none" stroke="#0c0c70" stroke-width="1"/><text x="837" y="481" fill="#0c0c70" font-family="Liberation Sans" font-size="9" text-anchor="middle">+</text><text x="837" y="508" fill="#0c0c70" font-family="Liberation Sans" font-size="9" text-anchor="middle">-</text><path d="M1108.5,422.5 L1108.5,461.5" fill="none" stroke="#0c0c70" stroke-width="1.2"/><path d="M1127.5,422.5 L1108.5,433.5" fill="none" stroke="#0c0c70" stroke-width="1.1"/><path d="M1108.5,450.5 L1127.5,461.5" fill="none" stroke="#0c0c70" stroke-width="1.1"/><path d="M1119.5,452.5 L1127.5,461.5 L1116.5,461.5" fill="none" stroke="#0c0c70" stroke-width="1.1"/><circle cx="1137.5" cy="181.5" r="3.6" fill="#ff00ff"/><circle cx="1137.5" cy="341.5" r="3.6" fill="#ff00ff"/><circle cx="927.5" cy="451.5" r="3.6" fill="#ff00ff"/><circle cx="1127.5" cy="481.5" r="3.6" fill="#ff00ff"/><text x="1169.6" y="218.3" fill="#0c0c70" stroke="#0c0c70" stroke-width="0.45" font-family="Liberation Sans" font-size="17.4">R5</text><text x="1169.6" y="241.0" fill="#0c0c70" stroke="#0c0c70" stroke-width="0.45" font-family="Liberation Sans" font-size="17.4">5.6k</text><text x="960.3" y="358.1" fill="#0c0c70" stroke="#0c0c70" stroke-width="0.45" font-family="Liberation Sans" font-size="17.4">R2</text><text x="961" y="381.5" fill="#0c0c70" stroke="#0c0c70" stroke-width="0.45" font-family="Liberation Sans" font-size="17.4">150k</text><text x="960" y="508.5" fill="#0c0c70" stroke="#0c0c70" stroke-width="0.45" font-family="Liberation Sans" font-size="17.4">R3</text><text x="960" y="532.5" fill="#0c0c70" stroke="#0c0c70" stroke-width="0.45" font-family="Liberation Sans" font-size="17.4">22k</text><text x="898" y="429.8" fill="#0c0c70" stroke="#0c0c70" stroke-width="0.45" font-family="Liberation Sans" font-size="17.4">C2</text><text x="869.4" y="478.5" fill="#0c0c70" stroke="#0c0c70" stroke-width="0.45" font-family="Liberation Sans" font-size="17.4">150u</text><text x="847.7" y="470.5" fill="#0c0c70" stroke="#0c0c70" stroke-width="0.45" font-family="Liberation Sans" font-size="17.4">V2</text><text x="1085.6" y="420.8" fill="#0c0c70" stroke="#0c0c70" stroke-width="0.45" font-family="Liberation Sans" font-size="17.4">Q1</text><text x="1053.7" y="482.0" fill="#0c0c70" stroke="#0c0c70" stroke-width="0.45" font-family="Liberation Sans" font-size="17.4">2N2222</text><text x="1297.7" y="319.5" fill="#0c0c70" stroke="#0c0c70" stroke-width="0.45" font-family="Liberation Sans" font-size="17.4">C1</text><text x="1298" y="368.5" fill="#0c0c70" stroke="#0c0c70" stroke-width="0.45" font-family="Liberation Sans" font-size="17.4">100u</text><text x="1470" y="478.5" fill="#0c0c70" stroke="#0c0c70" stroke-width="0.45" font-family="Liberation Sans" font-size="17.4">R4</text><text x="1470" y="502.5" fill="#0c0c70" stroke="#0c0c70" stroke-width="0.45" font-family="Liberation Sans" font-size="17.4">10k</text><text x="1159.7" y="558.8" fill="#0c0c70" stroke="#0c0c70" stroke-width="0.45" font-family="Liberation Sans" font-size="17.4">R6</text><text x="1159.7" y="581.5" fill="#0c0c70" stroke="#0c0c70" stroke-width="0.45" font-family="Liberation Sans" font-size="17.4">220</text><text x="1159.7" y="639.1" fill="#0c0c70" stroke="#0c0c70" stroke-width="0.45" font-family="Liberation Sans" font-size="17.4">R7</text><text x="1159.7" y="661.7" fill="#0c0c70" stroke="#0c0c70" stroke-width="0.45" font-family="Liberation Sans" font-size="17.4">820</text><text x="1260" y="649.2" fill="#0c0c70" stroke="#0c0c70" stroke-width="0.45" font-family="Liberation Sans" font-size="17.4">C3</text><text x="1260" y="668.0" fill="#0c0c70" stroke="#0c0c70" stroke-width="0.45" font-family="Liberation Sans" font-size="17.4">10u</text><text x="849.3" y="559.9" fill="#000" stroke="#000" stroke-width="0.45" font-family="Liberation Sans" font-size="20">0</text><text x="939" y="580.1" fill="#000" stroke="#000" stroke-width="0.45" font-family="Liberation Sans" font-size="20">0</text><text x="1449.5" y="550.3" fill="#000" stroke="#000" stroke-width="0.45" font-family="Liberation Sans" font-size="20">0</text><text x="1139.7" y="731.3" fill="#000" stroke="#000" stroke-width="0.45" font-family="Liberation Sans" font-size="20">0</text><text x="1498.7" y="287.7" fill="#000" stroke="#000" stroke-width="0.45" font-family="Liberation Sans" font-size="17">15V</text><text x="1441.5" y="346.6" fill="#d01020" stroke="#d01020" stroke-width="0.45" font-family="Liberation Sans" font-size="13">VO</text><text x="1491.7" y="383.6" fill="#70e070" stroke="#70e070" stroke-width="0.45" font-family="Liberation Sans" font-size="13">V</text><line x1="1437.5" y1="341.5" x2="1446" y2="349.5" stroke="#40e040" stroke-width="1"/><line x1="1446" y1="349.5" x2="1477" y2="380.5" stroke="#4ce44c" stroke-width="5" stroke-linecap="round"/><circle cx="1477" cy="380.5" r="9.6" fill="#4ce44c"/><rect x="1346" y="182" width="58" height="19" fill="#880a44"/><text x="1375.0" y="197.6" fill="#fff" font-family="Liberation Sans" font-size="17" text-anchor="middle" textLength="54" lengthAdjust="spacingAndGlyphs">15.00V</text><rect x="1200" y="342" width="58" height="19" fill="#880a44"/><text x="1229.0" y="357.6" fill="#fff" font-family="Liberation Sans" font-size="17" text-anchor="middle" textLength="54" lengthAdjust="spacingAndGlyphs">9.079V</text><rect x="1380" y="342" width="22" height="20" fill="#880a44"/><text x="1391.0" y="358.1" fill="#fff" font-family="Liberation Sans" font-size="17" text-anchor="middle" textLength="18" lengthAdjust="spacingAndGlyphs">0V</text><rect x="900" y="452" width="23" height="19" fill="#880a44"/><text x="911.5" y="467.6" fill="#fff" font-family="Liberation Sans" font-size="17" text-anchor="middle" textLength="19" lengthAdjust="spacingAndGlyphs">0V</text><rect x="986" y="451" width="58" height="21" fill="#880a44"/><text x="1015.0" y="467.6" fill="#fff" font-family="Liberation Sans" font-size="17" text-anchor="middle" textLength="54" lengthAdjust="spacingAndGlyphs">1.734V</text><rect x="1126" y="501" width="58" height="21" fill="#880a44"/><text x="1155.0" y="517.6" fill="#fff" font-family="Liberation Sans" font-size="17" text-anchor="middle" textLength="54" lengthAdjust="spacingAndGlyphs">1.110V</text><rect x="1176" y="611" width="76" height="21" fill="#880a44"/><text x="1214.0" y="627.6" fill="#fff" font-family="Liberation Sans" font-size="17" text-anchor="middle" textLength="72" lengthAdjust="spacingAndGlyphs">874.9mV</text><rect x="1176" y="683" width="22" height="18" fill="#880a44"/><text x="1187.0" y="698.1" fill="#fff" font-family="Liberation Sans" font-size="17" text-anchor="middle" textLength="18" lengthAdjust="spacingAndGlyphs">0V</text></svg>
<div class="a" style="left:821px;top:101px;width:8px;height:656px;background:#fff"></div>
<svg class="a" style="left:819px;top:190px" width="11" height="540" viewBox="819 190 11 540"><path d="M822,196 h2 q2,0 2,3 q0,3 -2,3 h-2Z" fill="none" stroke="#000" stroke-width="1"/><rect x="820" y="371" width="9" height="1" fill="#000"/><path d="M826,545 q-3,0 -3,3 q0,3 3,3" fill="none" stroke="#000" stroke-width="1"/><rect x="820" y="720" width="9" height="1.2" fill="#000"/><path d="M825,717 L829,720.5 L825,724Z" fill="#000"/></svg>
<div class="a" style="left:819px;top:90px;width:2px;height:667px;background:#000"></div>
<div class="a" style="left:829px;top:100px;width:1px;height:657px;background:#000"></div>
<div class="a" style="left:1528px;top:100px;width:17px;height:657px;background:#ededed"></div>
<div class="a" style="left:1528px;top:91px;width:17px;height:6px;background:#f4f4f4;border:1.5px solid #606060;border-top:none"></div>
<svg class="a" style="left:1528px;top:100px" width="17" height="660" viewBox="0 0 17 660"><path d="M4.5,10 l4,-4 l4,4" fill="none" stroke="#333" stroke-width="1.5"/><path d="M4.5,645 l4,4 l4,-4" fill="none" stroke="#333" stroke-width="1.5"/></svg>
<div class="a" style="left:1529px;top:150px;width:15px;height:283px;background:#c8c8c8"></div>
<div class="a" style="left:1545px;top:90px;width:6px;height:687px;background:#f0f0f0"></div>
<div class="a" style="left:1550px;top:60px;width:1.5px;height:720px;background:#a8a8a8"></div>
<div class="a" style="left:819px;top:757px;width:726px;height:18px;background:#e8e8e8"></div>
<div class="a" style="left:819px;top:757px;width:8px;height:16px;background:#fafafa;border:1.5px solid #808080;border-top:none"></div>
<svg class="a" style="left:819px;top:757px" width="726" height="18" viewBox="0 0 726 18"><path d="M20,5 l-4,4 l4,4" fill="none" stroke="#333" stroke-width="1.5"/><path d="M697,5 l4,4 l-4,4" fill="none" stroke="#333" stroke-width="1.5"/></svg>
<div class="a" style="left:1099px;top:759px;width:240px;height:14px;background:#c8c8c8"></div>
<div class="a" style="left:812px;top:780px;width:740px;height:1.5px;background:#b4b4b4"></div>
<div class="a" style="left:812px;top:780px;width:740px;height:8px;background:#f0f0f0;border-top:1px solid #b0b0b0"></div>
<div class="a" style="left:813px;top:787.5px;width:739px;height:90px;background:#f0f0f0;border-top:1.5px solid #a0a0a0;border-left:1.5px solid #a0a0a0;border-right:1.5px solid #a8a8a8"></div>
<div class="a" style="left:815px;top:815px;width:16px;height:62px;background:linear-gradient(90deg,#f0f0f0,#c4c4c4)"></div>
<svg class="a" style="left:815px;top:790px" width="16" height="30" viewBox="815 790 16 30"><rect x="817.5" y="792.5" width="10" height="10" fill="#f4f4f4" stroke="#999"/><path d="M819.8,795 l5.5,5.5 M825.3,795 l-5.5,5.5" stroke="#000" stroke-width="1.8"/><rect x="817.5" y="804.5" width="10" height="11" fill="#f0f0f0" stroke="#b0b0b0"/><path d="M821,807 l4,3 l-4,3Z" fill="#b4b4b4"/></svg>
<div class="a" style="left:830px;top:790.5px;width:720px;height:1px;background:#d0d0d0"></div>
<div class="a" style="left:830px;top:795px;width:720px;height:24px;background:#fff;border-top:2px solid #8a8a8a;border-left:1.5px solid #8a8a8a;border-bottom:2px solid #8a8a8a"></div>
<div class="a" style="left:831.5px;top:813px;width:718px;height:4px;background:#f0f0f0"></div>
<svg class="a" style="left:831px;top:797px" width="719" height="16" viewBox="831 797 719 16"><rect x="840.2" y="803.7" width="1.4" height="1.6" fill="#111"/><rect x="849.8" y="802.5" width="1.4" height="4" fill="#111"/><rect x="859.2" y="803.7" width="1.4" height="1.6" fill="#111"/><rect x="878.2" y="803.7" width="1.4" height="1.6" fill="#111"/><rect x="887.7" y="802.5" width="1.4" height="4" fill="#111"/><rect x="897.2" y="803.7" width="1.4" height="1.6" fill="#111"/><text x="867.2" y="809.5" font-family="Liberation Sans" font-size="12" fill="#222" text-anchor="middle" textLength="5" lengthAdjust="spacingAndGlyphs">1</text><rect x="916.2" y="803.7" width="1.4" height="1.6" fill="#111"/><rect x="925.7" y="802.5" width="1.4" height="4" fill="#111"/><rect x="935.2" y="803.7" width="1.4" height="1.6" fill="#111"/><text x="905.2" y="809.5" font-family="Liberation Sans" font-size="12" fill="#222" text-anchor="middle" textLength="5" lengthAdjust="spacingAndGlyphs">2</text><rect x="954.1" y="803.7" width="1.4" height="1.6" fill="#111"/><rect x="963.6" y="802.5" width="1.4" height="4" fill="#111"/><rect x="973.1" y="803.7" width="1.4" height="1.6" fill="#111"/><text x="943.1" y="809.5" font-family="Liberation Sans" font-size="12" fill="#222" text-anchor="middle" textLength="5" lengthAdjust="spacingAndGlyphs">3</text><rect x="992.1" y="803.7" width="1.4" height="1.6" fill="#111"/><rect x="1001.6" y="802.5" width="1.4" height="4" fill="#111"/><rect x="1011.1" y="803.7" width="1.4" height="1.6" fill="#111"/><text x="981.1" y="809.5" font-family="Liberation Sans" font-size="12" fill="#222" text-anchor="middle" textLength="5" lengthAdjust="spacingAndGlyphs">4</text><rect x="1030.0" y="803.7" width="1.4" height="1.6" fill="#111"/><rect x="1039.5" y="802.5" width="1.4" height="4" fill="#111"/><rect x="1049.0" y="803.7" width="1.4" height="1.6" fill="#111"/><text x="1019.0" y="809.5" font-family="Liberation Sans" font-size="12" fill="#222" text-anchor="middle" textLength="5" lengthAdjust="spacingAndGlyphs">5</text><rect x="1068.0" y="803.7" width="1.4" height="1.6" fill="#111"/><rect x="1077.5" y="802.5" width="1.4" height="4" fill="#111"/><rect x="1087.0" y="803.7" width="1.4" height="1.6" fill="#111"/><text x="1057.0" y="809.5" font-family="Liberation Sans" font-size="12" fill="#222" text-anchor="middle" textLength="5" lengthAdjust="spacingAndGlyphs">6</text><rect x="1105.9" y="803.7" width="1.4" height="1.6" fill="#111"/><rect x="1115.4" y="802.5" width="1.4" height="4" fill="#111"/><rect x="1124.9" y="803.7" width="1.4" height="1.6" fill="#111"/><text x="1094.9" y="809.5" font-family="Liberation Sans" font-size="12" fill="#222" text-anchor="middle" textLength="5" lengthAdjust="spacingAndGlyphs">7</text><rect x="1143.9" y="803.7" width="1.4" height="1.6" fill="#111"/><rect x="1153.4" y="802.5" width="1.4" height="4" fill="#111"/><rect x="1162.9" y="803.7" width="1.4" height="1.6" fill="#111"/><text x="1132.9" y="809.5" font-family="Liberation Sans" font-size="12" fill="#222" text-anchor="middle" textLength="5" lengthAdjust="spacingAndGlyphs">8</text><rect x="1181.8" y="803.7" width="1.4" height="1.6" fill="#111"/><rect x="1191.3" y="802.5" width="1.4" height="4" fill="#111"/><rect x="1200.8" y="803.7" width="1.4" height="1.6" fill="#111"/><text x="1170.8" y="809.5" font-family="Liberation Sans" font-size="12" fill="#222" text-anchor="middle" textLength="5" lengthAdjust="spacingAndGlyphs">9</text><rect x="1219.8" y="803.7" width="1.4" height="1.6" fill="#111"/><rect x="1229.2" y="802.5" width="1.4" height="4" fill="#111"/><rect x="1238.8" y="803.7" width="1.4" height="1.6" fill="#111"/><text x="1208.8" y="809.5" font-family="Liberation Sans" font-size="12" fill="#222" text-anchor="middle" textLength="11" lengthAdjust="spacingAndGlyphs">10</text><rect x="1257.7" y="803.7" width="1.4" height="1.6" fill="#111"/><rect x="1267.2" y="802.5" width="1.4" height="4" fill="#111"/><rect x="1276.7" y="803.7" width="1.4" height="1.6" fill="#111"/><text x="1246.7" y="809.5" font-family="Liberation Sans" font-size="12" fill="#222" text-anchor="middle" textLength="11" lengthAdjust="spacingAndGlyphs">11</text><rect x="1295.7" y="803.7" width="1.4" height="1.6" fill="#111"/><rect x="1305.2" y="802.5" width="1.4" height="4" fill="#111"/><rect x="1314.7" y="803.7" width="1.4" height="1.6" fill="#111"/><text x="1284.7" y="809.5" font-family="Liberation Sans" font-size="12" fill="#222" text-anchor="middle" textLength="11" lengthAdjust="spacingAndGlyphs">12</text><rect x="1333.6" y="803.7" width="1.4" height="1.6" fill="#111"/><rect x="1343.1" y="802.5" width="1.4" height="4" fill="#111"/><rect x="1352.6" y="803.7" width="1.4" height="1.6" fill="#111"/><text x="1322.6" y="809.5" font-family="Liberation Sans" font-size="12" fill="#222" text-anchor="middle" textLength="11" lengthAdjust="spacingAndGlyphs">13</text><rect x="1371.6" y="803.7" width="1.4" height="1.6" fill="#111"/><rect x="1381.1" y="802.5" width="1.4" height="4" fill="#111"/><rect x="1390.6" y="803.7" width="1.4" height="1.6" fill="#111"/><text x="1360.6" y="809.5" font-family="Liberation Sans" font-size="12" fill="#222" text-anchor="middle" textLength="11" lengthAdjust="spacingAndGlyphs">14</text><rect x="1409.5" y="803.7" width="1.4" height="1.6" fill="#111"/><rect x="1419.0" y="802.5" width="1.4" height="4" fill="#111"/><rect x="1428.5" y="803.7" width="1.4" height="1.6" fill="#111"/><text x="1398.5" y="809.5" font-family="Liberation Sans" font-size="12" fill="#222" text-anchor="middle" textLength="11" lengthAdjust="spacingAndGlyphs">15</text><rect x="1447.5" y="803.7" width="1.4" height="1.6" fill="#111"/><rect x="1457.0" y="802.5" width="1.4" height="4" fill="#111"/><rect x="1466.5" y="803.7" width="1.4" height="1.6" fill="#111"/><text x="1436.5" y="809.5" font-family="Liberation Sans" font-size="12" fill="#222" text-anchor="middle" textLength="11" lengthAdjust="spacingAndGlyphs">16</text><rect x="1485.4" y="803.7" width="1.4" height="1.6" fill="#111"/><rect x="1494.9" y="802.5" width="1.4" height="4" fill="#111"/><rect x="1504.4" y="803.7" width="1.4" height="1.6" fill="#111"/><text x="1474.4" y="809.5" font-family="Liberation Sans" font-size="12" fill="#222" text-anchor="middle" textLength="11" lengthAdjust="spacingAndGlyphs">17</text><rect x="1523.4" y="803.7" width="1.4" height="1.6" fill="#111"/><rect x="1532.9" y="802.5" width="1.4" height="4" fill="#111"/><rect x="1542.4" y="803.7" width="1.4" height="1.6" fill="#111"/><text x="1512.4" y="809.5" font-family="Liberation Sans" font-size="12" fill="#222" text-anchor="middle" textLength="11" lengthAdjust="spacingAndGlyphs">18</text><rect x="1561.3" y="803.7" width="1.4" height="1.6" fill="#111"/><rect x="1570.8" y="802.5" width="1.4" height="4" fill="#111"/><rect x="1580.3" y="803.7" width="1.4" height="1.6" fill="#111"/><text x="1550.3" y="809.5" font-family="Liberation Sans" font-size="12" fill="#222" text-anchor="middle" textLength="11" lengthAdjust="spacingAndGlyphs">19</text></svg>
<div class="a" style="left:830px;top:819px;width:720px;height:58px;background:#fff;border-left:2px solid #8a8a8a;border-top:2px solid #8a8a8a"></div>
<div class="a" style="left:841.4px;top:821px;font-size:14px;line-height:16px;color:#111;white-space:nowrap;width:688px;overflow:hidden;font-family:"Liberation Sans", sans-serif">(4.20, 2.65)</div>
<div class="a" style="left:841.4px;top:837px;font-size:14px;line-height:16px;color:#111;white-space:nowrap;width:688px;overflow:hidden;font-family:"Liberation Sans", sans-serif">INFO(ORCAP-2191): Creating PSpice Netlist</div>
<div class="a" style="left:841.4px;top:853px;font-size:14px;line-height:16px;color:#111;white-space:nowrap;width:688px;overflow:hidden;font-family:"Liberation Sans", sans-serif">INFO(ORNET-1041): Writing PSpice Flat Netlist C:\sfsdfsdf\dfdfsdf-PSpiceFiles\SCHEMATIC1\SCHEMATIC1.net</div>
<div class="a" style="left:841.4px;top:869px;font-size:14px;line-height:16px;color:#111;white-space:nowrap;width:688px;overflow:hidden;font-family:"Liberation Sans", sans-serif">INFO(ORNET-1156): PSpice netlist generation complete</div>
<div class="a" style="left:1529px;top:821px;width:20px;height:56px;background:#f0f0f0"></div>
<svg class="a" style="left:1529px;top:821px" width="20" height="20" viewBox="0 0 20 20"><path d="M6,11 l4,-4 l4,4" fill="none" stroke="#333" stroke-width="1.6"/></svg>
<svg class="a" style="left:1552px;top:54px" width="110" height="823" viewBox="1552 54 110 823"><defs><linearGradient id="tbg" x1="0" x2="1" y1="0" y2="0"><stop offset="0" stop-color="#ececec"/><stop offset="1" stop-color="#c6c6c6"/></linearGradient></defs><rect x="1585" y="55" width="33" height="417" rx="2" fill="url(#tbg)"/><rect x="1590" y="58" width="3" height="3" fill="#4a8ee0"/><rect x="1595" y="58" width="3" height="3" fill="#4a8ee0"/><rect x="1600" y="58" width="3" height="3" fill="#4a8ee0"/><rect x="1605" y="58" width="3" height="3" fill="#4a8ee0"/><rect x="1610" y="58" width="3" height="3" fill="#4a8ee0"/><rect x="1590" y="62" width="25" height="28" fill="#e0e0e0" opacity="0.6"/><path d="M1602,69 l-7,4 v8 l7,4 l7,-4 v-8Z" fill="#4a72c0" stroke="#2a4a8a"/><path d="M1602,69 v-5 M1595,81 l-6,4 M1609,81 l6,4" stroke="#d04a3a" stroke-width="2"/><rect x="1594.5" y="99.5" width="16" height="17" rx="2" fill="none" stroke="#ababab" stroke-width="1.5"/><path d="M1595,109 h15" stroke="#ababab" stroke-width="1.5"/><rect x="1596" y="110" width="13" height="5" fill="#c0c0c0"/><rect x="1594.5" y="130.5" width="16" height="17" rx="2" fill="none" stroke="#ababab" stroke-width="1.5"/><path d="M1595,140 h15" stroke="#ababab" stroke-width="1.5"/><rect x="1596" y="141" width="13" height="5" fill="#c0c0c0"/><rect x="1594.5" y="161.5" width="16" height="17" rx="2" fill="none" stroke="#ababab" stroke-width="1.5"/><path d="M1595,171 h15" stroke="#ababab" stroke-width="1.5"/><rect x="1596" y="172" width="13" height="5" fill="#c0c0c0"/><rect x="1594.5" y="192.5" width="16" height="17" rx="2" fill="none" stroke="#ababab" stroke-width="1.5"/><path d="M1595,202 h15" stroke="#ababab" stroke-width="1.5"/><rect x="1596" y="203" width="13" height="5" fill="#c0c0c0"/><rect x="1594.5" y="223.5" width="16" height="17" rx="2" fill="none" stroke="#ababab" stroke-width="1.5"/><path d="M1595,233 h15" stroke="#ababab" stroke-width="1.5"/><rect x="1596" y="234" width="13" height="5" fill="#c0c0c0"/><rect x="1594.5" y="254.5" width="16" height="17" rx="2" fill="none" stroke="#ababab" stroke-width="1.5"/><path d="M1595,264 h15" stroke="#ababab" stroke-width="1.5"/><rect x="1596" y="265" width="13" height="5" fill="#c0c0c0"/><path d="M1602,285 l-8,4.5 v9 l8,4.5 l8,-4.5 v-9Z" fill="#b6b6b6"/><path d="M1602,318 v10 l-8,6 M1602,328 l8,6" stroke="#b4b4b4" stroke-width="2" fill="none"/><text x="1602" y="362" font-family="Liberation Sans" font-size="9" fill="#aaa" text-anchor="middle">123</text><rect x="1593" y="363" width="18" height="5" fill="none" stroke="#b0b0b0"/><circle cx="1601" cy="385" r="6" fill="none" stroke="#b0b0b0" stroke-width="2"/><path d="M1605,389 l6,6" stroke="#b0b0b0" stroke-width="2.5"/><circle cx="1601" cy="416" r="6" fill="none" stroke="#b0b0b0" stroke-width="2"/><path d="M1605,420 l6,6" stroke="#b0b0b0" stroke-width="2.5"/><circle cx="1601" cy="447" r="6" fill="none" stroke="#b0b0b0" stroke-width="2"/><path d="M1605,451 l6,6" stroke="#b0b0b0" stroke-width="2.5"/><rect x="1618" y="55" width="44" height="447" rx="2" fill="url(#tbg)"/><rect x="1622" y="58" width="3" height="3" fill="#4a8ee0"/><rect x="1627" y="58" width="3" height="3" fill="#4a8ee0"/><rect x="1632" y="58" width="3" height="3" fill="#4a8ee0"/><rect x="1637" y="58" width="3" height="3" fill="#4a8ee0"/><rect x="1642" y="58" width="3" height="3" fill="#4a8ee0"/><rect x="1647" y="58" width="3" height="3" fill="#4a8ee0"/><rect x="1652" y="58" width="3" height="3" fill="#4a8ee0"/><rect x="1657" y="58" width="3" height="3" fill="#4a8ee0"/><rect x="1621.5" y="63.5" width="28" height="30" fill="#d8dadc" stroke="#3d8ee0"/><rect x="1650.5" y="63.5" width="14" height="30" fill="#d8dadc" stroke="#3d8ee0"/><path d="M1631,69 L1631,85 L1635,81 L1638,88 L1640,87 L1637,80 L1642,80Z" fill="#fff" stroke="#222" stroke-width="1"/><rect x="1655" y="70" width="10" height="16" fill="#6a8ac0" stroke="#404a60"/><rect x="1623" y="95" width="24" height="25" fill="#d6d6d6" opacity="0.7"/><rect x="1623" y="127" width="24" height="25" fill="#d6d6d6" opacity="0.7"/><rect x="1623" y="159" width="24" height="25" fill="#d6d6d6" opacity="0.7"/><rect x="1623" y="190" width="24" height="25" fill="#d6d6d6" opacity="0.7"/><rect x="1623" y="220" width="24" height="25" fill="#d6d6d6" opacity="0.7"/><rect x="1623" y="252" width="24" height="25" fill="#d6d6d6" opacity="0.7"/><rect x="1623" y="283" width="24" height="25" fill="#d6d6d6" opacity="0.7"/><rect x="1623" y="315" width="24" height="25" fill="#d6d6d6" opacity="0.7"/><rect x="1623" y="343" width="24" height="25" fill="#d6d6d6" opacity="0.7"/><rect x="1623" y="375" width="24" height="25" fill="#d6d6d6" opacity="0.7"/><rect x="1623" y="407" width="24" height="25" fill="#d6d6d6" opacity="0.7"/><rect x="1623" y="437" width="24" height="25" fill="#d6d6d6" opacity="0.7"/><rect x="1623" y="468" width="24" height="25" fill="#d6d6d6" opacity="0.7"/><path d="M1628,99 h5 v13 h5" stroke="#111" fill="none" stroke-width="1.8"/><rect x="1626" y="97" width="4" height="4" fill="#f4f090" stroke="#aaa"/><rect x="1637" y="111" width="4" height="4" fill="#f4f090" stroke="#aaa"/><path d="M1628,146 v-6 h6 v-6 h6" stroke="#111" fill="none" stroke-width="2.5"/><rect x="1625" y="144" width="5" height="5" fill="#f4f090" stroke="#aaa"/><rect x="1639" y="131" width="5" height="5" fill="#f4f090" stroke="#aaa"/><path d="M1628,178 v-6 h6 v-6 h6" stroke="#111" fill="none" stroke-width="2.5"/><rect x="1625" y="176" width="5" height="5" fill="#f4f090" stroke="#aaa"/><rect x="1639" y="163" width="5" height="5" fill="#f4f090" stroke="#aaa"/><path d="M1627,195 h6 v14 h7" stroke="#111" fill="none" stroke-width="2.8"/><rect x="1624" y="193" width="5" height="5" fill="#f4f090" stroke="#aaa"/><rect x="1638" y="207" width="5" height="5" fill="#f4f090" stroke="#aaa"/><rect x="1637" y="222" width="3" height="20" fill="#111"/><path d="M1627,240 l9,-8" stroke="#e05050" stroke-width="3"/><path d="M1635,253 v9 M1626,263 h18 M1629,267 h12 M1632,271 h6" stroke="#4a6ab0" stroke-width="1.6"/><path d="M1626,295 h5 l4,-4 h6 l4,4 l-4,4 h-6 l-4,-4" stroke="#333" fill="#c8ccd8" stroke-width="1.2"/><rect x="1627" y="319" width="14" height="16" fill="#f6f6f6" stroke="#555"/><path d="M1629,326 h4 v5 h6" stroke="#111" fill="none"/><rect x="1628" y="323" width="3" height="3" fill="#e8e040"/><rect x="1638" y="330" width="3" height="3" fill="#e8e040"/><path d="M1626,347 h14" stroke="#203070" stroke-width="2"/><rect x="1626" y="377" width="14" height="9" fill="#8aa0e0" stroke="#3050a0"/><path d="M1627,416 q5,-12 10,-2" stroke="#3050a0" fill="none" stroke-width="1.5"/><path d="M1625,446 q4,-8 6,-2 q3,6 6,-2" stroke="#3050a0" fill="none" stroke-width="1.5"/><path d="M1635,349 L1635,363 L1638,360 L1641,366 L1643,365 L1640,359 L1645,359Z" fill="#fff" stroke="#222" stroke-width="0.9"/><path d="M1635,381 L1635,395 L1638,392 L1641,398 L1643,397 L1640,391 L1645,391Z" fill="#fff" stroke="#222" stroke-width="0.9"/><path d="M1635,413 L1635,427 L1638,424 L1641,430 L1643,429 L1640,423 L1645,423Z" fill="#fff" stroke="#222" stroke-width="0.9"/><path d="M1635,443 L1635,457 L1638,454 L1641,460 L1643,459 L1640,453 L1645,453Z" fill="#fff" stroke="#222" stroke-width="0.9"/><rect x="1627.5" y="472.5" width="14" height="14" fill="none" stroke="#a0a0a0" stroke-width="1.5"/><circle cx="1641" cy="487" r="3.5" fill="#b8b8b8"/><rect x="1655" y="101" width="7" height="12" fill="#3a8a6a" opacity="0.65"/><rect x="1655" y="133" width="7" height="12" fill="#e0c040" opacity="0.65"/><rect x="1655" y="165" width="7" height="12" fill="#a0a0a0" opacity="0.65"/><rect x="1655" y="196" width="7" height="12" fill="#5a7ac0" opacity="0.65"/><rect x="1655" y="226" width="7" height="12" fill="#5a7ac0" opacity="0.65"/><rect x="1655" y="258" width="7" height="12" fill="#3a9a3a" opacity="0.65"/><rect x="1655" y="289" width="7" height="12" fill="#444" opacity="0.65"/><rect x="1655" y="321" width="7" height="12" fill="#222" opacity="0.65"/><rect x="1655" y="349" width="7" height="12" fill="#d04040" opacity="0.65"/><rect x="1655" y="381" width="7" height="12" fill="#5a7ac0" opacity="0.65"/><rect x="1655" y="413" width="7" height="12" fill="#5a7ac0" opacity="0.65"/><rect x="1655" y="443" width="7" height="12" fill="#888" opacity="0.65"/><rect x="1655" y="474" width="7" height="12" fill="#aaa" opacity="0.65"/><rect x="1554" y="677" width="32" height="200" rx="2" fill="url(#tbg)"/><rect x="1558" y="681" width="3" height="3" fill="#4a8ee0"/><rect x="1563" y="681" width="3" height="3" fill="#4a8ee0"/><rect x="1568" y="681" width="3" height="3" fill="#4a8ee0"/><rect x="1573" y="681" width="3" height="3" fill="#4a8ee0"/><rect x="1578" y="681" width="3" height="3" fill="#4a8ee0"/><rect x="1583" y="681" width="3" height="3" fill="#4a8ee0"/><rect x="1563.5" y="689.5" width="16" height="16" fill="none" stroke="#b0b0b0" stroke-width="1.5"/><rect x="1566" y="694" width="11" height="9" fill="#c6c6c6"/><rect x="1563.5" y="721.5" width="16" height="16" fill="none" stroke="#b0b0b0" stroke-width="1.5"/><rect x="1566" y="726" width="11" height="9" fill="#c6c6c6"/><rect x="1563.5" y="752.5" width="16" height="16" fill="none" stroke="#b0b0b0" stroke-width="1.5"/><rect x="1566" y="757" width="11" height="9" fill="#c6c6c6"/><rect x="1563.5" y="784.5" width="16" height="16" fill="none" stroke="#b0b0b0" stroke-width="1.5"/><rect x="1566" y="789" width="11" height="9" fill="#c6c6c6"/><rect x="1563.5" y="815.5" width="16" height="16" fill="none" stroke="#b0b0b0" stroke-width="1.5"/><rect x="1566" y="820" width="11" height="9" fill="#c6c6c6"/><rect x="1563.5" y="846.5" width="16" height="16" fill="none" stroke="#b0b0b0" stroke-width="1.5"/><rect x="1566" y="851" width="11" height="9" fill="#c6c6c6"/></svg>
<svg class="a" style="left:204px;top:680px" width="537" height="197" viewBox="204 680 537 197"><rect x="204" y="680" width="537" height="197" fill="#adc9e6"/><rect x="204.5" y="680.5" width="536" height="200" fill="none" stroke="#8aaed4" stroke-width="1"/><text x="377.3" y="701" font-family="Liberation Sans" font-size="15" fill="#2b3b52" text-anchor="start" textLength="190" lengthAdjust="spacingAndGlyphs">Simulation Settings - sdfasdf</text><rect x="703" y="681" width="31" height="20" fill="#c74b4b"/><path d="M714.5,687 l8.5,8.5 M723,687 l-8.5,8.5" stroke="#fff" stroke-width="1.8"/><rect x="212" y="710" width="521.5" height="170" fill="#f0f0f0"/><rect x="212" y="710" width="521.5" height="1" fill="#dfe9f3"/><rect x="218.5" y="738.5" width="506" height="150" fill="#fff" stroke="#d9d9d9"/><rect x="220.5" y="720.5" width="47" height="18" fill="#f0f0f0" stroke="#d9d9d9"/><text x="244.0" y="734" font-family="Liberation Sans" font-size="12" fill="#111" text-anchor="middle" textLength="36.7" lengthAdjust="spacingAndGlyphs">General</text><rect x="323.5" y="720.5" width="96" height="18" fill="#f0f0f0" stroke="#d9d9d9"/><text x="371.5" y="734" font-family="Liberation Sans" font-size="12" fill="#111" text-anchor="middle" textLength="85.5" lengthAdjust="spacingAndGlyphs">Configuration Files</text><rect x="419.5" y="720.5" width="49" height="18" fill="#f0f0f0" stroke="#d9d9d9"/><text x="444.0" y="734" font-family="Liberation Sans" font-size="12" fill="#111" text-anchor="middle" textLength="35.6" lengthAdjust="spacingAndGlyphs">Options</text><rect x="468.5" y="720.5" width="86.5" height="18" fill="#f0f0f0" stroke="#d9d9d9"/><text x="511.75" y="734" font-family="Liberation Sans" font-size="12" fill="#111" text-anchor="middle" textLength="70.5" lengthAdjust="spacingAndGlyphs">Data Collection</text><rect x="555.0" y="720.5" width="80.0" height="18" fill="#f0f0f0" stroke="#d9d9d9"/><text x="595.0" y="734" font-family="Liberation Sans" font-size="12" fill="#111" text-anchor="middle" textLength="69.4" lengthAdjust="spacingAndGlyphs">Probe Window</text><rect x="267.5" y="718.5" width="56" height="21" fill="#fff" stroke="#d9d9d9"/><rect x="268" y="737" width="55" height="3" fill="#fff"/><text x="275.3" y="732" font-family="Liberation Sans" font-size="12" fill="#111" text-anchor="start" textLength="36.7" lengthAdjust="spacingAndGlyphs">Analysis</text><text x="231.2" y="762" font-family="Liberation Sans" font-size="12" fill="#111" text-anchor="start" textLength="63.1" lengthAdjust="spacingAndGlyphs">Analysis type:</text><rect x="231.5" y="769.5" width="139" height="20" fill="#e6e6e6" stroke="#adadad"/><text x="235.6" y="784" font-family="Liberation Sans" font-size="12" fill="#111" text-anchor="start" textLength="80.8" lengthAdjust="spacingAndGlyphs">AC Sweep/Noise</text><path d="M358,777 l4,4 l4,-4" stroke="#333" fill="none" stroke-width="1.6"/><text x="231.2" y="815" font-family="Liberation Sans" font-size="12" fill="#111" text-anchor="start" textLength="38.6" lengthAdjust="spacingAndGlyphs">Options:</text><rect x="231.5" y="821.5" width="139" height="70" fill="#fff" stroke="#828790"/><rect x="247" y="823" width="122" height="15" fill="#3399ff"/><rect x="234.5" y="824.5" width="12" height="12" fill="#fff" stroke="#333"/><text x="248.8" y="835" font-family="Liberation Sans" font-size="12" fill="#fff" text-anchor="start" textLength="77.8" lengthAdjust="spacingAndGlyphs">General Settings</text><rect x="234.5" y="840.5" width="12" height="12" fill="#fff" stroke="#333"/><text x="248.8" y="851" font-family="Liberation Sans" font-size="12" fill="#111" text-anchor="start" textLength="116.6" lengthAdjust="spacingAndGlyphs">Monte Carlo/Worst Case</text><rect x="234.5" y="856.5" width="12" height="12" fill="#fff" stroke="#333"/><text x="248.8" y="867" font-family="Liberation Sans" font-size="12" fill="#111" text-anchor="start" textLength="85.2" lengthAdjust="spacingAndGlyphs">Parametric Sweep</text><rect x="234.5" y="872.5" width="12" height="12" fill="#fff" stroke="#333"/><text x="248.8" y="883" font-family="Liberation Sans" font-size="12" fill="#111" text-anchor="start" textLength="98" lengthAdjust="spacingAndGlyphs">Temperature (Sweep)</text><path d="M237,830 l3,3.5 l5,-7" stroke="#000" fill="none" stroke-width="2"/><rect x="396.5" y="761.5" width="310" height="96" fill="none" stroke="#dcdcdc"/><rect x="402" y="755" width="82" height="12" fill="#fff"/><text x="405" y="765" font-family="Liberation Sans" font-size="12" fill="#111" text-anchor="start" textLength="77.6" lengthAdjust="spacingAndGlyphs">AC Sweep Type</text><circle cx="417" cy="784" r="6" fill="#fff" stroke="#333"/><text x="426.5" y="788" font-family="Liberation Sans" font-size="12" fill="#111" text-anchor="start" textLength="29" lengthAdjust="spacingAndGlyphs">Linear</text><circle cx="417" cy="807" r="6" fill="#fff" stroke="#333"/><circle cx="417" cy="807" r="3.5" fill="#111"/><text x="426.5" y="811" font-family="Liberation Sans" font-size="12" fill="#111" text-anchor="start" textLength="54" lengthAdjust="spacingAndGlyphs">Logarithmic</text><rect x="426.5" y="820.5" width="80" height="20" fill="#e6e6e6" stroke="#adadad"/><text x="430.5" y="835" font-family="Liberation Sans" font-size="12" fill="#111" text-anchor="start" textLength="38" lengthAdjust="spacingAndGlyphs">Decade</text><path d="M494,828 l4,4 l4,-4" stroke="#333" fill="none" stroke-width="1.6"/><text x="550" y="784" font-family="Liberation Sans" font-size="12" fill="#111" text-anchor="start" textLength="77.2" lengthAdjust="spacingAndGlyphs">Start Frequency:</text><rect x="635.5" y="771.5" width="59" height="19" fill="#fff" stroke="#a4a4a4"/><text x="638" y="785" font-family='Liberation Sans' font-size="12" fill="#111">0.1</text><text x="550" y="810" font-family="Liberation Sans" font-size="12" fill="#111" text-anchor="start" textLength="73.9" lengthAdjust="spacingAndGlyphs">End Frequency:</text><rect x="635.5" y="797.5" width="59" height="19" fill="#fff" stroke="#a4a4a4"/><text x="638" y="811" font-family='Liberation Sans' font-size="12" fill="#111">100meg</text><text x="550" y="836" font-family="Liberation Sans" font-size="12" fill="#111" text-anchor="start" textLength="73.5" lengthAdjust="spacingAndGlyphs">Points/Decade:</text><rect x="635.5" y="823.5" width="59" height="19" fill="#fff" stroke="#a4a4a4"/><text x="638" y="837" font-family='Liberation Sans' font-size="12" fill="#111">100</text><rect x="396.5" y="870.5" width="310" height="20" fill="none" stroke="#dcdcdc"/><rect x="402" y="864" width="76" height="12" fill="#fff"/><text x="405.9" y="874" font-family="Liberation Sans" font-size="12" fill="#111" text-anchor="start" textLength="68" lengthAdjust="spacingAndGlyphs">Noise Analysis</text></svg>
</body></html>
